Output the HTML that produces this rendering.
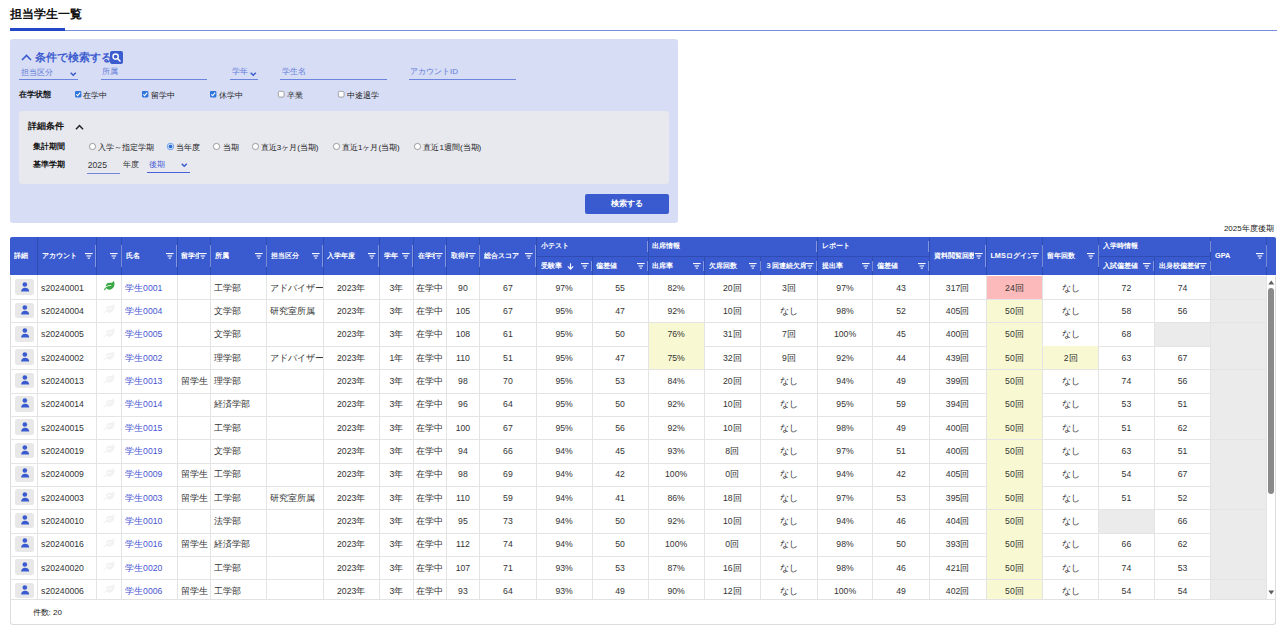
<!DOCTYPE html><html><head><meta charset="utf-8"><style>
html,body{margin:0;padding:0}
body{width:1280px;height:633px;overflow:hidden;background:#fff;position:relative;font-family:"Liberation Sans",sans-serif}
.a{position:absolute;line-height:1;white-space:nowrap}
.c{position:absolute;display:flex;align-items:center;overflow:hidden;white-space:nowrap;box-sizing:border-box}
svg{position:absolute;overflow:visible}
</style></head><body>
<div class="a" style="left:10px;top:8.37px;font-size:12.2px;color:#111;font-weight:bold;">担当学生一覧</div>
<div class="a" style="left:10px;top:30px;width:1266.70px;height:1.00px;background:#7b90dd"></div>
<div class="a" style="left:10px;top:27.9px;width:55.20px;height:2.80px;background:#2447c8"></div>
<div class="a" style="left:10px;top:39.4px;width:668.00px;height:183.60px;background:#d6ddf5;border-radius:3px"></div>
<svg style="left:21px;top:54px" width="11" height="7" viewBox="0 0 11 7"><polyline points="1,6 5.5,1.5 10,6" fill="none" stroke="#3b5bcf" stroke-width="1.6"/></svg>
<div class="a" style="left:34.8px;top:51.91px;font-size:10.5px;color:#3b5bcf;font-weight:bold;">条件で検索する</div>
<div class="a" style="left:110px;top:51px;width:12.80px;height:12.80px;background:#3b5bcf;border-radius:2px"></div>
<svg style="left:110px;top:51px" width="13" height="13" viewBox="0 0 13 13"><circle cx="5.6" cy="5.6" r="2.6" fill="none" stroke="#fff" stroke-width="1.4"/><line x1="7.5" y1="7.5" x2="10" y2="10" stroke="#fff" stroke-width="1.6" stroke-linecap="round"/></svg>
<div class="a" style="left:20.5px;top:68.73px;font-size:8px;color:#627ad8;font-weight:normal;">担当区分</div>
<svg style="left:70px;top:71.5px" width="6.5" height="4" viewBox="0 0 6.5 4"><polyline points="0.7,0.7 3.25,3.3 5.8,0.7" fill="none" stroke="#3b5bcf" stroke-width="1.5"/></svg>
<div class="a" style="left:18.8px;top:78.8px;width:59.70px;height:1.20px;background:#6b84e0"></div>
<div class="a" style="left:101.8px;top:68.23px;font-size:8px;color:#627ad8;font-weight:normal;">所属</div>
<div class="a" style="left:100.9px;top:78.8px;width:106.10px;height:1.20px;background:#6b84e0"></div>
<div class="a" style="left:231.9px;top:68.23px;font-size:8px;color:#627ad8;font-weight:normal;">学年</div>
<svg style="left:249.8px;top:71.5px" width="6.5" height="4" viewBox="0 0 6.5 4"><polyline points="0.7,0.7 3.25,3.3 5.8,0.7" fill="none" stroke="#3b5bcf" stroke-width="1.5"/></svg>
<div class="a" style="left:229.8px;top:78.8px;width:28.20px;height:1.20px;background:#6b84e0"></div>
<div class="a" style="left:281.5px;top:68.23px;font-size:8px;color:#627ad8;font-weight:normal;">学生名</div>
<div class="a" style="left:280px;top:78.8px;width:107.00px;height:1.20px;background:#6b84e0"></div>
<div class="a" style="left:410px;top:68.23px;font-size:8px;color:#627ad8;font-weight:normal;">アカウントID</div>
<div class="a" style="left:409px;top:78.8px;width:106.60px;height:1.20px;background:#6b84e0"></div>
<div class="a" style="left:18.8px;top:90.53px;font-size:8px;color:#111;font-weight:bold;">在学状態</div>
<svg style="left:74.7px;top:91px" width="6.4" height="6.4" viewBox="0 0 7 7"><rect x="0" y="0" width="7" height="7" rx="1.2" fill="#2f74db"/><polyline points="1.4,3.6 2.9,5.1 5.7,1.8" fill="none" stroke="#fff" stroke-width="1.1"/></svg>
<div class="a" style="left:83.3px;top:91.83px;font-size:8px;color:#222;font-weight:normal;">在学中</div>
<svg style="left:142px;top:91px" width="6.4" height="6.4" viewBox="0 0 7 7"><rect x="0" y="0" width="7" height="7" rx="1.2" fill="#2f74db"/><polyline points="1.4,3.6 2.9,5.1 5.7,1.8" fill="none" stroke="#fff" stroke-width="1.1"/></svg>
<div class="a" style="left:150.6px;top:91.83px;font-size:8px;color:#222;font-weight:normal;">留学中</div>
<svg style="left:210px;top:91px" width="6.4" height="6.4" viewBox="0 0 7 7"><rect x="0" y="0" width="7" height="7" rx="1.2" fill="#2f74db"/><polyline points="1.4,3.6 2.9,5.1 5.7,1.8" fill="none" stroke="#fff" stroke-width="1.1"/></svg>
<div class="a" style="left:218.6px;top:91.83px;font-size:8px;color:#222;font-weight:normal;">休学中</div>
<svg style="left:278.3px;top:91px" width="6.4" height="6.4" viewBox="0 0 7 7"><rect x="0.4" y="0.4" width="6.2" height="6.2" rx="1.2" fill="#fff" stroke="#777" stroke-width="0.7"/></svg>
<div class="a" style="left:286.90000000000003px;top:91.83px;font-size:8px;color:#222;font-weight:normal;">卒業</div>
<svg style="left:338.4px;top:91px" width="6.4" height="6.4" viewBox="0 0 7 7"><rect x="0.4" y="0.4" width="6.2" height="6.2" rx="1.2" fill="#fff" stroke="#777" stroke-width="0.7"/></svg>
<div class="a" style="left:347.0px;top:91.83px;font-size:8px;color:#222;font-weight:normal;">中途退学</div>
<div class="a" style="left:19px;top:111px;width:649.75px;height:73.40px;background:#e8e9ef;border-radius:3px"></div>
<div class="a" style="left:27.8px;top:121.70px;font-size:9.33px;color:#111;font-weight:bold;">詳細条件</div>
<svg style="left:74.5px;top:124px" width="9" height="6" viewBox="0 0 9 6"><polyline points="1,5.3 4.5,1.5 8,5.3" fill="none" stroke="#222" stroke-width="1.5"/></svg>
<div class="a" style="left:33px;top:142.73px;font-size:8px;color:#111;font-weight:bold;">集計期間</div>
<svg style="left:89px;top:143px" width="7" height="7" viewBox="0 0 7 7"><circle cx="3.5" cy="3.5" r="3.1" fill="#fff" stroke="#777" stroke-width="0.7"/></svg>
<div class="a" style="left:98.2px;top:143.73px;font-size:8px;color:#222;font-weight:normal;">入学～指定学期</div>
<svg style="left:167px;top:143px" width="7" height="7" viewBox="0 0 7 7"><circle cx="3.5" cy="3.5" r="3.2" fill="#fff" stroke="#2a6fd6" stroke-width="0.7"/><circle cx="3.5" cy="3.5" r="2" fill="#2a6fd6"/></svg>
<div class="a" style="left:176.2px;top:143.73px;font-size:8px;color:#222;font-weight:normal;">当年度</div>
<svg style="left:213.4px;top:143px" width="7" height="7" viewBox="0 0 7 7"><circle cx="3.5" cy="3.5" r="3.1" fill="#fff" stroke="#777" stroke-width="0.7"/></svg>
<div class="a" style="left:222.6px;top:143.73px;font-size:8px;color:#222;font-weight:normal;">当期</div>
<svg style="left:251.5px;top:143px" width="7" height="7" viewBox="0 0 7 7"><circle cx="3.5" cy="3.5" r="3.1" fill="#fff" stroke="#777" stroke-width="0.7"/></svg>
<div class="a" style="left:260.7px;top:143.73px;font-size:8px;color:#222;font-weight:normal;">直近3ヶ月(当期)</div>
<svg style="left:332.8px;top:143px" width="7" height="7" viewBox="0 0 7 7"><circle cx="3.5" cy="3.5" r="3.1" fill="#fff" stroke="#777" stroke-width="0.7"/></svg>
<div class="a" style="left:342.0px;top:143.73px;font-size:8px;color:#222;font-weight:normal;">直近1ヶ月(当期)</div>
<svg style="left:414.25px;top:143px" width="7" height="7" viewBox="0 0 7 7"><circle cx="3.5" cy="3.5" r="3.1" fill="#fff" stroke="#777" stroke-width="0.7"/></svg>
<div class="a" style="left:423.45px;top:143.73px;font-size:8px;color:#222;font-weight:normal;">直近1週間(当期)</div>
<div class="a" style="left:33px;top:161.03px;font-size:8px;color:#111;font-weight:bold;">基準学期</div>
<div class="a" style="left:87.7px;top:160.86px;font-size:8.67px;color:#333;font-weight:normal;">2025</div>
<div class="a" style="left:86.6px;top:173px;width:33.10px;height:1.10px;background:#7088da"></div>
<div class="a" style="left:122.8px;top:161.33px;font-size:8px;color:#333;font-weight:normal;">年度</div>
<div class="a" style="left:148.5px;top:161.33px;font-size:8px;color:#4a62d6;font-weight:normal;">後期</div>
<svg style="left:181px;top:163.4px" width="6.5" height="4" viewBox="0 0 6.5 4"><polyline points="0.7,0.7 3.25,3.3 5.8,0.7" fill="none" stroke="#3b5bcf" stroke-width="1.5"/></svg>
<div class="a" style="left:146.9px;top:171.5px;width:42.80px;height:1.10px;background:#4a62d6"></div>
<div class="a" style="left:585px;top:193.75px;width:83.75px;height:20.00px;background:#3a5bcf;border-radius:2px"></div>
<div class="c" style="left:585px;top:193.75px;width:83.75px;height:20px;justify-content:center;font-size:8px;color:#fff;font-weight:bold">検索する</div>
<div class="a" style="left:1223.9px;top:225.23px;font-size:8px;color:#222;font-weight:normal;">2025年度後期</div>
<div class="a" style="left:10px;top:275.5px;width:1265.70px;height:349.50px;border:1px solid #dcdcdc;border-top:none;box-sizing:border-box;border-radius:0 0 3px 3px;background:#fff"></div>
<div class="a" style="left:10px;top:236.6px;width:1265.70px;height:38.90px;background:#3a5bcf;border-radius:2px 2px 0 0"></div>
<div class="a" style="left:37.0px;top:236.6px;width:1.00px;height:38.90px;background:#2f4cb5"></div>
<div class="a" style="left:95.5px;top:236.6px;width:1.00px;height:38.90px;background:#2f4cb5"></div>
<div class="a" style="left:121.0px;top:236.6px;width:1.00px;height:38.90px;background:#2f4cb5"></div>
<div class="a" style="left:176.5px;top:236.6px;width:1.00px;height:38.90px;background:#2f4cb5"></div>
<div class="a" style="left:210.0px;top:236.6px;width:1.00px;height:38.90px;background:#2f4cb5"></div>
<div class="a" style="left:265.9px;top:236.6px;width:1.00px;height:38.90px;background:#2f4cb5"></div>
<div class="a" style="left:322.5px;top:236.6px;width:1.00px;height:38.90px;background:#2f4cb5"></div>
<div class="a" style="left:378.8px;top:236.6px;width:1.00px;height:38.90px;background:#2f4cb5"></div>
<div class="a" style="left:412.8px;top:236.6px;width:1.00px;height:38.90px;background:#2f4cb5"></div>
<div class="a" style="left:445.8px;top:236.6px;width:1.00px;height:38.90px;background:#2f4cb5"></div>
<div class="a" style="left:479.0px;top:236.6px;width:1.00px;height:38.90px;background:#2f4cb5"></div>
<div class="a" style="left:535.8px;top:236.6px;width:1.00px;height:38.90px;background:#2f4cb5"></div>
<div class="a" style="left:591.5px;top:236.6px;width:1.00px;height:38.90px;background:#2f4cb5"></div>
<div class="a" style="left:647.5px;top:236.6px;width:1.00px;height:38.90px;background:#2f4cb5"></div>
<div class="a" style="left:703.7px;top:236.6px;width:1.00px;height:38.90px;background:#2f4cb5"></div>
<div class="a" style="left:759.9px;top:236.6px;width:1.00px;height:38.90px;background:#2f4cb5"></div>
<div class="a" style="left:816.7px;top:236.6px;width:1.00px;height:38.90px;background:#2f4cb5"></div>
<div class="a" style="left:872.4px;top:236.6px;width:1.00px;height:38.90px;background:#2f4cb5"></div>
<div class="a" style="left:928.7px;top:236.6px;width:1.00px;height:38.90px;background:#2f4cb5"></div>
<div class="a" style="left:985.5px;top:236.6px;width:1.00px;height:38.90px;background:#2f4cb5"></div>
<div class="a" style="left:1042.3px;top:236.6px;width:1.00px;height:38.90px;background:#2f4cb5"></div>
<div class="a" style="left:1098.0px;top:236.6px;width:1.00px;height:38.90px;background:#2f4cb5"></div>
<div class="a" style="left:1153.8px;top:236.6px;width:1.00px;height:38.90px;background:#2f4cb5"></div>
<div class="a" style="left:1210.1px;top:236.6px;width:1.00px;height:38.90px;background:#2f4cb5"></div>
<div class="a" style="left:1266.4px;top:236.6px;width:1.00px;height:38.90px;background:#2f4cb5"></div>
<div class="a" style="left:536.8px;top:236.6px;width:110.70px;height:19.80px;background:#3a5bcf"></div>
<div class="a" style="left:536.8px;top:255.89999999999998px;width:110.70px;height:1.00px;background:#2f4cb5"></div>
<div class="a" style="left:648.5px;top:236.6px;width:168.20px;height:19.80px;background:#3a5bcf"></div>
<div class="a" style="left:648.5px;top:255.89999999999998px;width:168.20px;height:1.00px;background:#2f4cb5"></div>
<div class="a" style="left:817.7px;top:236.6px;width:111.00px;height:19.80px;background:#3a5bcf"></div>
<div class="a" style="left:817.7px;top:255.89999999999998px;width:111.00px;height:1.00px;background:#2f4cb5"></div>
<div class="a" style="left:1099.0px;top:236.6px;width:111.10px;height:19.80px;background:#3a5bcf"></div>
<div class="a" style="left:1099.0px;top:255.89999999999998px;width:111.10px;height:1.00px;background:#2f4cb5"></div>
<div class="c" style="left:14.40px;top:236.60px;width:21.10px;height:38.90px;font-size:7.33px;color:#fff;font-weight:bold;line-height:1;padding-bottom:0.6px">詳細</div>
<div class="c" style="left:41.90px;top:236.60px;width:42.60px;height:38.90px;font-size:7.33px;color:#fff;font-weight:bold;line-height:1;padding-bottom:0.6px">アカウント</div>
<svg style="left:84.60px;top:252.95px" width="8" height="6" viewBox="0 0 8 6"><rect x="0" y="0" width="7.6" height="1.1" fill="#fff"/><rect x="1.5" y="2.4" width="4.6" height="1.1" fill="#fff"/><rect x="2.7" y="4.6" width="2.2" height="1.1" fill="#fff"/></svg>
<div class="a" style="left:95.1px;top:245.15800000000002px;width:1.00px;height:21.78px;background:rgba(255,255,255,0.36)"></div>
<div class="c" style="left:100.40px;top:236.60px;width:9.60px;height:38.90px;font-size:7.33px;color:#fff;font-weight:bold;line-height:1;padding-bottom:0.6px"></div>
<svg style="left:110.10px;top:252.95px" width="8" height="6" viewBox="0 0 8 6"><rect x="0" y="0" width="7.6" height="1.1" fill="#fff"/><rect x="1.5" y="2.4" width="4.6" height="1.1" fill="#fff"/><rect x="2.7" y="4.6" width="2.2" height="1.1" fill="#fff"/></svg>
<div class="a" style="left:120.6px;top:245.15800000000002px;width:1.00px;height:21.78px;background:rgba(255,255,255,0.36)"></div>
<div class="c" style="left:125.90px;top:236.60px;width:39.60px;height:38.90px;font-size:7.33px;color:#fff;font-weight:bold;line-height:1;padding-bottom:0.6px">氏名</div>
<svg style="left:165.60px;top:252.95px" width="8" height="6" viewBox="0 0 8 6"><rect x="0" y="0" width="7.6" height="1.1" fill="#fff"/><rect x="1.5" y="2.4" width="4.6" height="1.1" fill="#fff"/><rect x="2.7" y="4.6" width="2.2" height="1.1" fill="#fff"/></svg>
<div class="a" style="left:176.1px;top:245.15800000000002px;width:1.00px;height:21.78px;background:rgba(255,255,255,0.36)"></div>
<div class="c" style="left:181.40px;top:236.60px;width:17.60px;height:38.90px;font-size:7.33px;color:#fff;font-weight:bold;line-height:1;padding-bottom:0.6px">留学生区分</div>
<svg style="left:199.10px;top:252.95px" width="8" height="6" viewBox="0 0 8 6"><rect x="0" y="0" width="7.6" height="1.1" fill="#fff"/><rect x="1.5" y="2.4" width="4.6" height="1.1" fill="#fff"/><rect x="2.7" y="4.6" width="2.2" height="1.1" fill="#fff"/></svg>
<div class="a" style="left:209.6px;top:245.15800000000002px;width:1.00px;height:21.78px;background:rgba(255,255,255,0.36)"></div>
<div class="c" style="left:214.90px;top:236.60px;width:40.00px;height:38.90px;font-size:7.33px;color:#fff;font-weight:bold;line-height:1;padding-bottom:0.6px">所属</div>
<svg style="left:255.00px;top:252.95px" width="8" height="6" viewBox="0 0 8 6"><rect x="0" y="0" width="7.6" height="1.1" fill="#fff"/><rect x="1.5" y="2.4" width="4.6" height="1.1" fill="#fff"/><rect x="2.7" y="4.6" width="2.2" height="1.1" fill="#fff"/></svg>
<div class="a" style="left:265.5px;top:245.15800000000002px;width:1.00px;height:21.78px;background:rgba(255,255,255,0.36)"></div>
<div class="c" style="left:270.80px;top:236.60px;width:40.70px;height:38.90px;font-size:7.33px;color:#fff;font-weight:bold;line-height:1;padding-bottom:0.6px">担当区分</div>
<svg style="left:311.60px;top:252.95px" width="8" height="6" viewBox="0 0 8 6"><rect x="0" y="0" width="7.6" height="1.1" fill="#fff"/><rect x="1.5" y="2.4" width="4.6" height="1.1" fill="#fff"/><rect x="2.7" y="4.6" width="2.2" height="1.1" fill="#fff"/></svg>
<div class="a" style="left:322.1px;top:245.15800000000002px;width:1.00px;height:21.78px;background:rgba(255,255,255,0.36)"></div>
<div class="c" style="left:327.40px;top:236.60px;width:40.40px;height:38.90px;font-size:7.33px;color:#fff;font-weight:bold;line-height:1;padding-bottom:0.6px">入学年度</div>
<svg style="left:367.90px;top:252.95px" width="8" height="6" viewBox="0 0 8 6"><rect x="0" y="0" width="7.6" height="1.1" fill="#fff"/><rect x="1.5" y="2.4" width="4.6" height="1.1" fill="#fff"/><rect x="2.7" y="4.6" width="2.2" height="1.1" fill="#fff"/></svg>
<div class="a" style="left:378.40000000000003px;top:245.15800000000002px;width:1.00px;height:21.78px;background:rgba(255,255,255,0.36)"></div>
<div class="c" style="left:383.70px;top:236.60px;width:18.10px;height:38.90px;font-size:7.33px;color:#fff;font-weight:bold;line-height:1;padding-bottom:0.6px">学年</div>
<svg style="left:401.90px;top:252.95px" width="8" height="6" viewBox="0 0 8 6"><rect x="0" y="0" width="7.6" height="1.1" fill="#fff"/><rect x="1.5" y="2.4" width="4.6" height="1.1" fill="#fff"/><rect x="2.7" y="4.6" width="2.2" height="1.1" fill="#fff"/></svg>
<div class="a" style="left:412.40000000000003px;top:245.15800000000002px;width:1.00px;height:21.78px;background:rgba(255,255,255,0.36)"></div>
<div class="c" style="left:417.70px;top:236.60px;width:17.10px;height:38.90px;font-size:7.33px;color:#fff;font-weight:bold;line-height:1;padding-bottom:0.6px">在学状態</div>
<svg style="left:434.90px;top:252.95px" width="8" height="6" viewBox="0 0 8 6"><rect x="0" y="0" width="7.6" height="1.1" fill="#fff"/><rect x="1.5" y="2.4" width="4.6" height="1.1" fill="#fff"/><rect x="2.7" y="4.6" width="2.2" height="1.1" fill="#fff"/></svg>
<div class="a" style="left:445.40000000000003px;top:245.15800000000002px;width:1.00px;height:21.78px;background:rgba(255,255,255,0.36)"></div>
<div class="c" style="left:450.70px;top:236.60px;width:17.30px;height:38.90px;font-size:7.33px;color:#fff;font-weight:bold;line-height:1;padding-bottom:0.6px">取得単位数</div>
<svg style="left:468.10px;top:252.95px" width="8" height="6" viewBox="0 0 8 6"><rect x="0" y="0" width="7.6" height="1.1" fill="#fff"/><rect x="1.5" y="2.4" width="4.6" height="1.1" fill="#fff"/><rect x="2.7" y="4.6" width="2.2" height="1.1" fill="#fff"/></svg>
<div class="a" style="left:478.6px;top:245.15800000000002px;width:1.00px;height:21.78px;background:rgba(255,255,255,0.36)"></div>
<div class="c" style="left:483.90px;top:236.60px;width:40.90px;height:38.90px;font-size:7.33px;color:#fff;font-weight:bold;line-height:1;padding-bottom:0.6px">総合スコア</div>
<svg style="left:524.90px;top:252.95px" width="8" height="6" viewBox="0 0 8 6"><rect x="0" y="0" width="7.6" height="1.1" fill="#fff"/><rect x="1.5" y="2.4" width="4.6" height="1.1" fill="#fff"/><rect x="2.7" y="4.6" width="2.2" height="1.1" fill="#fff"/></svg>
<div class="a" style="left:535.4px;top:245.15800000000002px;width:1.00px;height:21.78px;background:rgba(255,255,255,0.36)"></div>
<div class="c" style="left:933.60px;top:236.60px;width:40.90px;height:38.90px;font-size:7.33px;color:#fff;font-weight:bold;line-height:1;padding-bottom:0.6px">資料閲覧回数</div>
<svg style="left:974.60px;top:252.95px" width="8" height="6" viewBox="0 0 8 6"><rect x="0" y="0" width="7.6" height="1.1" fill="#fff"/><rect x="1.5" y="2.4" width="4.6" height="1.1" fill="#fff"/><rect x="2.7" y="4.6" width="2.2" height="1.1" fill="#fff"/></svg>
<div class="a" style="left:985.1px;top:245.15800000000002px;width:1.00px;height:21.78px;background:rgba(255,255,255,0.36)"></div>
<div class="c" style="left:990.40px;top:236.60px;width:40.90px;height:38.90px;font-size:7.33px;color:#fff;font-weight:bold;line-height:1;padding-bottom:0.6px">LMSログイン回数</div>
<svg style="left:1031.40px;top:252.95px" width="8" height="6" viewBox="0 0 8 6"><rect x="0" y="0" width="7.6" height="1.1" fill="#fff"/><rect x="1.5" y="2.4" width="4.6" height="1.1" fill="#fff"/><rect x="2.7" y="4.6" width="2.2" height="1.1" fill="#fff"/></svg>
<div class="a" style="left:1041.8999999999999px;top:245.15800000000002px;width:1.00px;height:21.78px;background:rgba(255,255,255,0.36)"></div>
<div class="c" style="left:1047.20px;top:236.60px;width:39.80px;height:38.90px;font-size:7.33px;color:#fff;font-weight:bold;line-height:1;padding-bottom:0.6px">留年回数</div>
<svg style="left:1087.10px;top:252.95px" width="8" height="6" viewBox="0 0 8 6"><rect x="0" y="0" width="7.6" height="1.1" fill="#fff"/><rect x="1.5" y="2.4" width="4.6" height="1.1" fill="#fff"/><rect x="2.7" y="4.6" width="2.2" height="1.1" fill="#fff"/></svg>
<div class="a" style="left:1097.6px;top:245.15800000000002px;width:1.00px;height:21.78px;background:rgba(255,255,255,0.36)"></div>
<div class="c" style="left:1215.00px;top:236.60px;width:40.40px;height:38.90px;font-size:7.33px;color:#fff;font-weight:bold;line-height:1;padding-bottom:0.6px">GPA</div>
<svg style="left:1255.50px;top:252.95px" width="8" height="6" viewBox="0 0 8 6"><rect x="0" y="0" width="7.6" height="1.1" fill="#fff"/><rect x="1.5" y="2.4" width="4.6" height="1.1" fill="#fff"/><rect x="2.7" y="4.6" width="2.2" height="1.1" fill="#fff"/></svg>
<div class="a" style="left:1266.0px;top:245.15800000000002px;width:1.00px;height:21.78px;background:rgba(255,255,255,0.36)"></div>
<div class="c" style="left:540.70px;top:236.60px;width:105.30px;height:19.80px;font-size:7.33px;color:#fff;font-weight:bold;line-height:1;padding-bottom:1.5px">小テスト</div>
<div class="a" style="left:647.1px;top:240.95600000000002px;width:1.00px;height:11.09px;background:rgba(255,255,255,0.36)"></div>
<div class="c" style="left:540.70px;top:256.40px;width:39.80px;height:19.10px;font-size:7.33px;color:#fff;font-weight:bold;line-height:1;padding-bottom:1.5px">受験率</div>
<svg style="left:580.60px;top:262.85px" width="8" height="6" viewBox="0 0 8 6"><rect x="0" y="0" width="7.6" height="1.1" fill="#fff"/><rect x="1.5" y="2.4" width="4.6" height="1.1" fill="#fff"/><rect x="2.7" y="4.6" width="2.2" height="1.1" fill="#fff"/></svg>
<svg style="left:567.10px;top:262.65px" width="7" height="7" viewBox="0 0 7 7"><line x1="3.5" y1="0.4" x2="3.5" y2="6" stroke="#fff" stroke-width="1.2"/><polyline points="0.8,3.4 3.5,6.1 6.2,3.4" fill="none" stroke="#fff" stroke-width="1.2"/></svg>
<div class="a" style="left:591.1px;top:260.602px;width:1.00px;height:10.70px;background:rgba(255,255,255,0.36)"></div>
<div class="c" style="left:596.40px;top:256.40px;width:40.10px;height:19.10px;font-size:7.33px;color:#fff;font-weight:bold;line-height:1;padding-bottom:1.5px">偏差値</div>
<svg style="left:636.60px;top:262.85px" width="8" height="6" viewBox="0 0 8 6"><rect x="0" y="0" width="7.6" height="1.1" fill="#fff"/><rect x="1.5" y="2.4" width="4.6" height="1.1" fill="#fff"/><rect x="2.7" y="4.6" width="2.2" height="1.1" fill="#fff"/></svg>
<div class="a" style="left:647.1px;top:260.602px;width:1.00px;height:10.70px;background:rgba(255,255,255,0.36)"></div>
<div class="c" style="left:652.40px;top:236.60px;width:162.80px;height:19.80px;font-size:7.33px;color:#fff;font-weight:bold;line-height:1;padding-bottom:1.5px">出席情報</div>
<div class="a" style="left:816.3000000000001px;top:240.95600000000002px;width:1.00px;height:11.09px;background:rgba(255,255,255,0.36)"></div>
<div class="c" style="left:652.40px;top:256.40px;width:40.30px;height:19.10px;font-size:7.33px;color:#fff;font-weight:bold;line-height:1;padding-bottom:1.5px">出席率</div>
<svg style="left:692.80px;top:262.85px" width="8" height="6" viewBox="0 0 8 6"><rect x="0" y="0" width="7.6" height="1.1" fill="#fff"/><rect x="1.5" y="2.4" width="4.6" height="1.1" fill="#fff"/><rect x="2.7" y="4.6" width="2.2" height="1.1" fill="#fff"/></svg>
<div class="a" style="left:703.3000000000001px;top:260.602px;width:1.00px;height:10.70px;background:rgba(255,255,255,0.36)"></div>
<div class="c" style="left:708.60px;top:256.40px;width:40.30px;height:19.10px;font-size:7.33px;color:#fff;font-weight:bold;line-height:1;padding-bottom:1.5px">欠席回数</div>
<svg style="left:749.00px;top:262.85px" width="8" height="6" viewBox="0 0 8 6"><rect x="0" y="0" width="7.6" height="1.1" fill="#fff"/><rect x="1.5" y="2.4" width="4.6" height="1.1" fill="#fff"/><rect x="2.7" y="4.6" width="2.2" height="1.1" fill="#fff"/></svg>
<div class="a" style="left:759.5px;top:260.602px;width:1.00px;height:10.70px;background:rgba(255,255,255,0.36)"></div>
<div class="c" style="left:764.80px;top:256.40px;width:40.90px;height:19.10px;font-size:7.33px;color:#fff;font-weight:bold;line-height:1;padding-bottom:1.5px">３回連続欠席</div>
<svg style="left:805.80px;top:262.85px" width="8" height="6" viewBox="0 0 8 6"><rect x="0" y="0" width="7.6" height="1.1" fill="#fff"/><rect x="1.5" y="2.4" width="4.6" height="1.1" fill="#fff"/><rect x="2.7" y="4.6" width="2.2" height="1.1" fill="#fff"/></svg>
<div class="a" style="left:816.3000000000001px;top:260.602px;width:1.00px;height:10.70px;background:rgba(255,255,255,0.36)"></div>
<div class="c" style="left:821.60px;top:236.60px;width:105.60px;height:19.80px;font-size:7.33px;color:#fff;font-weight:bold;line-height:1;padding-bottom:1.5px">レポート</div>
<div class="a" style="left:928.3000000000001px;top:240.95600000000002px;width:1.00px;height:11.09px;background:rgba(255,255,255,0.36)"></div>
<div class="c" style="left:821.60px;top:256.40px;width:39.80px;height:19.10px;font-size:7.33px;color:#fff;font-weight:bold;line-height:1;padding-bottom:1.5px">提出率</div>
<svg style="left:861.50px;top:262.85px" width="8" height="6" viewBox="0 0 8 6"><rect x="0" y="0" width="7.6" height="1.1" fill="#fff"/><rect x="1.5" y="2.4" width="4.6" height="1.1" fill="#fff"/><rect x="2.7" y="4.6" width="2.2" height="1.1" fill="#fff"/></svg>
<div class="a" style="left:872.0px;top:260.602px;width:1.00px;height:10.70px;background:rgba(255,255,255,0.36)"></div>
<div class="c" style="left:877.30px;top:256.40px;width:40.40px;height:19.10px;font-size:7.33px;color:#fff;font-weight:bold;line-height:1;padding-bottom:1.5px">偏差値</div>
<svg style="left:917.80px;top:262.85px" width="8" height="6" viewBox="0 0 8 6"><rect x="0" y="0" width="7.6" height="1.1" fill="#fff"/><rect x="1.5" y="2.4" width="4.6" height="1.1" fill="#fff"/><rect x="2.7" y="4.6" width="2.2" height="1.1" fill="#fff"/></svg>
<div class="a" style="left:928.3000000000001px;top:260.602px;width:1.00px;height:10.70px;background:rgba(255,255,255,0.36)"></div>
<div class="c" style="left:1102.90px;top:236.60px;width:105.70px;height:19.80px;font-size:7.33px;color:#fff;font-weight:bold;line-height:1;padding-bottom:1.5px">入学時情報</div>
<div class="a" style="left:1209.6999999999998px;top:240.95600000000002px;width:1.00px;height:11.09px;background:rgba(255,255,255,0.36)"></div>
<div class="c" style="left:1102.90px;top:256.40px;width:39.90px;height:19.10px;font-size:7.33px;color:#fff;font-weight:bold;line-height:1;padding-bottom:1.5px">入試偏差値</div>
<svg style="left:1142.90px;top:262.85px" width="8" height="6" viewBox="0 0 8 6"><rect x="0" y="0" width="7.6" height="1.1" fill="#fff"/><rect x="1.5" y="2.4" width="4.6" height="1.1" fill="#fff"/><rect x="2.7" y="4.6" width="2.2" height="1.1" fill="#fff"/></svg>
<div class="a" style="left:1153.3999999999999px;top:260.602px;width:1.00px;height:10.70px;background:rgba(255,255,255,0.36)"></div>
<div class="c" style="left:1158.70px;top:256.40px;width:40.40px;height:19.10px;font-size:7.33px;color:#fff;font-weight:bold;line-height:1;padding-bottom:1.5px">出身校偏差値</div>
<svg style="left:1199.20px;top:262.85px" width="8" height="6" viewBox="0 0 8 6"><rect x="0" y="0" width="7.6" height="1.1" fill="#fff"/><rect x="1.5" y="2.4" width="4.6" height="1.1" fill="#fff"/><rect x="2.7" y="4.6" width="2.2" height="1.1" fill="#fff"/></svg>
<div class="a" style="left:1209.6999999999998px;top:260.602px;width:1.00px;height:10.70px;background:rgba(255,255,255,0.36)"></div>
<div class="a" style="left:0;top:0;width:1280px;height:599.20px;overflow:hidden">
<div class="a" style="left:986px;top:276.3px;width:56.80px;height:23.34px;background:#fdbaba"></div>
<div class="a" style="left:1210.6px;top:276.3px;width:56.30px;height:23.34px;background:#ebebeb"></div>
<div class="a" style="left:10px;top:299.14px;width:1256.90px;height:1.00px;background:#e4e4e4"></div>
<div class="a" style="left:14.8px;top:279.2px;width:19.30px;height:15.80px;background:#e8e8e8;border-radius:2.5px"></div>
<svg style="left:20.8px;top:281.60px" width="9" height="10" viewBox="0 0 9 10"><circle cx="3.85" cy="2.55" r="2.3" fill="#3a5bcf"/><path d="M0.1,9.6 C0.1,7.1 1.8,5.8 4.15,5.8 C6.5,5.8 8.2,7.1 8.2,9.6 Z" fill="#3a5bcf"/></svg>
<svg style="left:103.7px;top:281.00px" width="11" height="10" viewBox="0 0 11 10"><path transform="scale(0.01823)" d="M546.2 9.7c-5.6-12.5-21.6-13-28.3-1.2C486.9 62.4 431.4 96 368 96h-80C182 96 96 182 96 288c0 7 .8 13.7 1.5 20.5C161.3 262.8 253.4 224 384 224c8.8 0 16 7.2 16 16s-7.2 16-16 16C132.6 256 26 410.1 2.4 468c-6.6 16.3 1.2 34.9 17.5 41.6 16.4 6.8 35-1.1 41.8-17.3 1.5-3.6 20.9-47.9 71.9-90.6 32.4 43.9 94 85.8 174.9 77.2C465.5 467.5 576 326.7 576 154.3c0-50.2-10.8-102.2-29.8-144.6z" fill="#3aa845"/></svg>
<div class="c" style="left:37.50px;top:276.30px;width:58.50px;height:23.34px;justify-content:flex-start;padding-left:3.6px;font-size:8.67px;color:#333;line-height:1;padding-bottom:0.2px">s20240001</div>
<div class="c" style="left:121.50px;top:276.30px;width:55.50px;height:23.34px;justify-content:flex-start;padding-left:3.6px;font-size:8.67px;color:#4756d2;line-height:1;padding-bottom:0.2px">学生0001</div>
<div class="c" style="left:210.50px;top:276.30px;width:55.90px;height:23.34px;justify-content:flex-start;padding-left:3.6px;font-size:8.67px;color:#333;line-height:1;padding-bottom:0.2px">工学部</div>
<div class="c" style="left:266.40px;top:276.30px;width:56.60px;height:23.34px;justify-content:flex-start;padding-left:3.6px;font-size:8.67px;color:#333;line-height:1;padding-bottom:0.2px">アドバイザー</div>
<div class="c" style="left:323.00px;top:276.30px;width:56.30px;height:23.34px;justify-content:center;font-size:8.67px;color:#333;line-height:1;padding-bottom:0.2px">2023年</div>
<div class="c" style="left:379.30px;top:276.30px;width:34.00px;height:23.34px;justify-content:center;font-size:8.67px;color:#333;line-height:1;padding-bottom:0.2px">3年</div>
<div class="c" style="left:413.30px;top:276.30px;width:33.00px;height:23.34px;justify-content:center;font-size:8.67px;color:#333;line-height:1;padding-bottom:0.2px">在学中</div>
<div class="c" style="left:446.30px;top:276.30px;width:33.20px;height:23.34px;justify-content:center;font-size:8.67px;color:#333;line-height:1;padding-bottom:0.2px">90</div>
<div class="c" style="left:479.50px;top:276.30px;width:56.80px;height:23.34px;justify-content:center;font-size:8.67px;color:#333;line-height:1;padding-bottom:0.2px">67</div>
<div class="c" style="left:536.30px;top:276.30px;width:55.70px;height:23.34px;justify-content:center;font-size:8.67px;color:#333;line-height:1;padding-bottom:0.2px">97%</div>
<div class="c" style="left:592.00px;top:276.30px;width:56.00px;height:23.34px;justify-content:center;font-size:8.67px;color:#333;line-height:1;padding-bottom:0.2px">55</div>
<div class="c" style="left:648.00px;top:276.30px;width:56.20px;height:23.34px;justify-content:center;font-size:8.67px;color:#333;line-height:1;padding-bottom:0.2px">82%</div>
<div class="c" style="left:704.20px;top:276.30px;width:56.20px;height:23.34px;justify-content:center;font-size:8.67px;color:#333;line-height:1;padding-bottom:0.2px">20回</div>
<div class="c" style="left:760.40px;top:276.30px;width:56.80px;height:23.34px;justify-content:center;font-size:8.67px;color:#333;line-height:1;padding-bottom:0.2px">3回</div>
<div class="c" style="left:817.20px;top:276.30px;width:55.70px;height:23.34px;justify-content:center;font-size:8.67px;color:#333;line-height:1;padding-bottom:0.2px">97%</div>
<div class="c" style="left:872.90px;top:276.30px;width:56.30px;height:23.34px;justify-content:center;font-size:8.67px;color:#333;line-height:1;padding-bottom:0.2px">43</div>
<div class="c" style="left:929.20px;top:276.30px;width:56.80px;height:23.34px;justify-content:center;font-size:8.67px;color:#333;line-height:1;padding-bottom:0.2px">317回</div>
<div class="c" style="left:986.00px;top:276.30px;width:56.80px;height:23.34px;justify-content:center;font-size:8.67px;color:#333;line-height:1;padding-bottom:0.2px">24回</div>
<div class="c" style="left:1042.80px;top:276.30px;width:55.70px;height:23.34px;justify-content:center;font-size:8.67px;color:#333;line-height:1;padding-bottom:0.2px">なし</div>
<div class="c" style="left:1098.50px;top:276.30px;width:55.80px;height:23.34px;justify-content:center;font-size:8.67px;color:#333;line-height:1;padding-bottom:0.2px">72</div>
<div class="c" style="left:1154.30px;top:276.30px;width:56.30px;height:23.34px;justify-content:center;font-size:8.67px;color:#333;line-height:1;padding-bottom:0.2px">74</div>
<div class="a" style="left:986px;top:299.64px;width:56.80px;height:23.34px;background:#f8f8d2"></div>
<div class="a" style="left:1210.6px;top:299.64px;width:56.30px;height:23.34px;background:#ebebeb"></div>
<div class="a" style="left:10px;top:322.47999999999996px;width:1256.90px;height:1.00px;background:#e4e4e4"></div>
<div class="a" style="left:14.8px;top:302.53999999999996px;width:19.30px;height:15.80px;background:#e8e8e8;border-radius:2.5px"></div>
<svg style="left:20.8px;top:304.94px" width="9" height="10" viewBox="0 0 9 10"><circle cx="3.85" cy="2.55" r="2.3" fill="#3a5bcf"/><path d="M0.1,9.6 C0.1,7.1 1.8,5.8 4.15,5.8 C6.5,5.8 8.2,7.1 8.2,9.6 Z" fill="#3a5bcf"/></svg>
<svg style="left:103.7px;top:304.34px" width="11" height="10" viewBox="0 0 11 10"><path transform="scale(0.01823)" d="M546.2 9.7c-5.6-12.5-21.6-13-28.3-1.2C486.9 62.4 431.4 96 368 96h-80C182 96 96 182 96 288c0 7 .8 13.7 1.5 20.5C161.3 262.8 253.4 224 384 224c8.8 0 16 7.2 16 16s-7.2 16-16 16C132.6 256 26 410.1 2.4 468c-6.6 16.3 1.2 34.9 17.5 41.6 16.4 6.8 35-1.1 41.8-17.3 1.5-3.6 20.9-47.9 71.9-90.6 32.4 43.9 94 85.8 174.9 77.2C465.5 467.5 576 326.7 576 154.3c0-50.2-10.8-102.2-29.8-144.6z" fill="#f2f2f2"/></svg>
<div class="c" style="left:37.50px;top:299.64px;width:58.50px;height:23.34px;justify-content:flex-start;padding-left:3.6px;font-size:8.67px;color:#333;line-height:1;padding-bottom:0.2px">s20240004</div>
<div class="c" style="left:121.50px;top:299.64px;width:55.50px;height:23.34px;justify-content:flex-start;padding-left:3.6px;font-size:8.67px;color:#4756d2;line-height:1;padding-bottom:0.2px">学生0004</div>
<div class="c" style="left:210.50px;top:299.64px;width:55.90px;height:23.34px;justify-content:flex-start;padding-left:3.6px;font-size:8.67px;color:#333;line-height:1;padding-bottom:0.2px">文学部</div>
<div class="c" style="left:266.40px;top:299.64px;width:56.60px;height:23.34px;justify-content:flex-start;padding-left:3.6px;font-size:8.67px;color:#333;line-height:1;padding-bottom:0.2px">研究室所属</div>
<div class="c" style="left:323.00px;top:299.64px;width:56.30px;height:23.34px;justify-content:center;font-size:8.67px;color:#333;line-height:1;padding-bottom:0.2px">2023年</div>
<div class="c" style="left:379.30px;top:299.64px;width:34.00px;height:23.34px;justify-content:center;font-size:8.67px;color:#333;line-height:1;padding-bottom:0.2px">3年</div>
<div class="c" style="left:413.30px;top:299.64px;width:33.00px;height:23.34px;justify-content:center;font-size:8.67px;color:#333;line-height:1;padding-bottom:0.2px">在学中</div>
<div class="c" style="left:446.30px;top:299.64px;width:33.20px;height:23.34px;justify-content:center;font-size:8.67px;color:#333;line-height:1;padding-bottom:0.2px">105</div>
<div class="c" style="left:479.50px;top:299.64px;width:56.80px;height:23.34px;justify-content:center;font-size:8.67px;color:#333;line-height:1;padding-bottom:0.2px">67</div>
<div class="c" style="left:536.30px;top:299.64px;width:55.70px;height:23.34px;justify-content:center;font-size:8.67px;color:#333;line-height:1;padding-bottom:0.2px">95%</div>
<div class="c" style="left:592.00px;top:299.64px;width:56.00px;height:23.34px;justify-content:center;font-size:8.67px;color:#333;line-height:1;padding-bottom:0.2px">47</div>
<div class="c" style="left:648.00px;top:299.64px;width:56.20px;height:23.34px;justify-content:center;font-size:8.67px;color:#333;line-height:1;padding-bottom:0.2px">92%</div>
<div class="c" style="left:704.20px;top:299.64px;width:56.20px;height:23.34px;justify-content:center;font-size:8.67px;color:#333;line-height:1;padding-bottom:0.2px">10回</div>
<div class="c" style="left:760.40px;top:299.64px;width:56.80px;height:23.34px;justify-content:center;font-size:8.67px;color:#333;line-height:1;padding-bottom:0.2px">なし</div>
<div class="c" style="left:817.20px;top:299.64px;width:55.70px;height:23.34px;justify-content:center;font-size:8.67px;color:#333;line-height:1;padding-bottom:0.2px">98%</div>
<div class="c" style="left:872.90px;top:299.64px;width:56.30px;height:23.34px;justify-content:center;font-size:8.67px;color:#333;line-height:1;padding-bottom:0.2px">52</div>
<div class="c" style="left:929.20px;top:299.64px;width:56.80px;height:23.34px;justify-content:center;font-size:8.67px;color:#333;line-height:1;padding-bottom:0.2px">405回</div>
<div class="c" style="left:986.00px;top:299.64px;width:56.80px;height:23.34px;justify-content:center;font-size:8.67px;color:#333;line-height:1;padding-bottom:0.2px">50回</div>
<div class="c" style="left:1042.80px;top:299.64px;width:55.70px;height:23.34px;justify-content:center;font-size:8.67px;color:#333;line-height:1;padding-bottom:0.2px">なし</div>
<div class="c" style="left:1098.50px;top:299.64px;width:55.80px;height:23.34px;justify-content:center;font-size:8.67px;color:#333;line-height:1;padding-bottom:0.2px">58</div>
<div class="c" style="left:1154.30px;top:299.64px;width:56.30px;height:23.34px;justify-content:center;font-size:8.67px;color:#333;line-height:1;padding-bottom:0.2px">56</div>
<div class="a" style="left:648px;top:322.98px;width:56.20px;height:23.34px;background:#f8f8d2"></div>
<div class="a" style="left:986px;top:322.98px;width:56.80px;height:23.34px;background:#f8f8d2"></div>
<div class="a" style="left:1154.3px;top:322.98px;width:56.30px;height:23.34px;background:#ebebeb"></div>
<div class="a" style="left:1210.6px;top:322.98px;width:56.30px;height:23.34px;background:#ebebeb"></div>
<div class="a" style="left:10px;top:345.82px;width:1256.90px;height:1.00px;background:#e4e4e4"></div>
<div class="a" style="left:14.8px;top:325.88px;width:19.30px;height:15.80px;background:#e8e8e8;border-radius:2.5px"></div>
<svg style="left:20.8px;top:328.28px" width="9" height="10" viewBox="0 0 9 10"><circle cx="3.85" cy="2.55" r="2.3" fill="#3a5bcf"/><path d="M0.1,9.6 C0.1,7.1 1.8,5.8 4.15,5.8 C6.5,5.8 8.2,7.1 8.2,9.6 Z" fill="#3a5bcf"/></svg>
<svg style="left:103.7px;top:327.68px" width="11" height="10" viewBox="0 0 11 10"><path transform="scale(0.01823)" d="M546.2 9.7c-5.6-12.5-21.6-13-28.3-1.2C486.9 62.4 431.4 96 368 96h-80C182 96 96 182 96 288c0 7 .8 13.7 1.5 20.5C161.3 262.8 253.4 224 384 224c8.8 0 16 7.2 16 16s-7.2 16-16 16C132.6 256 26 410.1 2.4 468c-6.6 16.3 1.2 34.9 17.5 41.6 16.4 6.8 35-1.1 41.8-17.3 1.5-3.6 20.9-47.9 71.9-90.6 32.4 43.9 94 85.8 174.9 77.2C465.5 467.5 576 326.7 576 154.3c0-50.2-10.8-102.2-29.8-144.6z" fill="#f2f2f2"/></svg>
<div class="c" style="left:37.50px;top:322.98px;width:58.50px;height:23.34px;justify-content:flex-start;padding-left:3.6px;font-size:8.67px;color:#333;line-height:1;padding-bottom:0.2px">s20240005</div>
<div class="c" style="left:121.50px;top:322.98px;width:55.50px;height:23.34px;justify-content:flex-start;padding-left:3.6px;font-size:8.67px;color:#4756d2;line-height:1;padding-bottom:0.2px">学生0005</div>
<div class="c" style="left:210.50px;top:322.98px;width:55.90px;height:23.34px;justify-content:flex-start;padding-left:3.6px;font-size:8.67px;color:#333;line-height:1;padding-bottom:0.2px">文学部</div>
<div class="c" style="left:323.00px;top:322.98px;width:56.30px;height:23.34px;justify-content:center;font-size:8.67px;color:#333;line-height:1;padding-bottom:0.2px">2023年</div>
<div class="c" style="left:379.30px;top:322.98px;width:34.00px;height:23.34px;justify-content:center;font-size:8.67px;color:#333;line-height:1;padding-bottom:0.2px">3年</div>
<div class="c" style="left:413.30px;top:322.98px;width:33.00px;height:23.34px;justify-content:center;font-size:8.67px;color:#333;line-height:1;padding-bottom:0.2px">在学中</div>
<div class="c" style="left:446.30px;top:322.98px;width:33.20px;height:23.34px;justify-content:center;font-size:8.67px;color:#333;line-height:1;padding-bottom:0.2px">108</div>
<div class="c" style="left:479.50px;top:322.98px;width:56.80px;height:23.34px;justify-content:center;font-size:8.67px;color:#333;line-height:1;padding-bottom:0.2px">61</div>
<div class="c" style="left:536.30px;top:322.98px;width:55.70px;height:23.34px;justify-content:center;font-size:8.67px;color:#333;line-height:1;padding-bottom:0.2px">95%</div>
<div class="c" style="left:592.00px;top:322.98px;width:56.00px;height:23.34px;justify-content:center;font-size:8.67px;color:#333;line-height:1;padding-bottom:0.2px">50</div>
<div class="c" style="left:648.00px;top:322.98px;width:56.20px;height:23.34px;justify-content:center;font-size:8.67px;color:#333;line-height:1;padding-bottom:0.2px">76%</div>
<div class="c" style="left:704.20px;top:322.98px;width:56.20px;height:23.34px;justify-content:center;font-size:8.67px;color:#333;line-height:1;padding-bottom:0.2px">31回</div>
<div class="c" style="left:760.40px;top:322.98px;width:56.80px;height:23.34px;justify-content:center;font-size:8.67px;color:#333;line-height:1;padding-bottom:0.2px">7回</div>
<div class="c" style="left:817.20px;top:322.98px;width:55.70px;height:23.34px;justify-content:center;font-size:8.67px;color:#333;line-height:1;padding-bottom:0.2px">100%</div>
<div class="c" style="left:872.90px;top:322.98px;width:56.30px;height:23.34px;justify-content:center;font-size:8.67px;color:#333;line-height:1;padding-bottom:0.2px">45</div>
<div class="c" style="left:929.20px;top:322.98px;width:56.80px;height:23.34px;justify-content:center;font-size:8.67px;color:#333;line-height:1;padding-bottom:0.2px">400回</div>
<div class="c" style="left:986.00px;top:322.98px;width:56.80px;height:23.34px;justify-content:center;font-size:8.67px;color:#333;line-height:1;padding-bottom:0.2px">50回</div>
<div class="c" style="left:1042.80px;top:322.98px;width:55.70px;height:23.34px;justify-content:center;font-size:8.67px;color:#333;line-height:1;padding-bottom:0.2px">なし</div>
<div class="c" style="left:1098.50px;top:322.98px;width:55.80px;height:23.34px;justify-content:center;font-size:8.67px;color:#333;line-height:1;padding-bottom:0.2px">68</div>
<div class="a" style="left:648px;top:346.32px;width:56.20px;height:23.34px;background:#f8f8d2"></div>
<div class="a" style="left:986px;top:346.32px;width:56.80px;height:23.34px;background:#f8f8d2"></div>
<div class="a" style="left:1042.8px;top:346.32px;width:55.70px;height:23.34px;background:#f8f8d2"></div>
<div class="a" style="left:1210.6px;top:346.32px;width:56.30px;height:23.34px;background:#ebebeb"></div>
<div class="a" style="left:10px;top:369.15999999999997px;width:1256.90px;height:1.00px;background:#e4e4e4"></div>
<div class="a" style="left:14.8px;top:349.21999999999997px;width:19.30px;height:15.80px;background:#e8e8e8;border-radius:2.5px"></div>
<svg style="left:20.8px;top:351.62px" width="9" height="10" viewBox="0 0 9 10"><circle cx="3.85" cy="2.55" r="2.3" fill="#3a5bcf"/><path d="M0.1,9.6 C0.1,7.1 1.8,5.8 4.15,5.8 C6.5,5.8 8.2,7.1 8.2,9.6 Z" fill="#3a5bcf"/></svg>
<svg style="left:103.7px;top:351.02px" width="11" height="10" viewBox="0 0 11 10"><path transform="scale(0.01823)" d="M546.2 9.7c-5.6-12.5-21.6-13-28.3-1.2C486.9 62.4 431.4 96 368 96h-80C182 96 96 182 96 288c0 7 .8 13.7 1.5 20.5C161.3 262.8 253.4 224 384 224c8.8 0 16 7.2 16 16s-7.2 16-16 16C132.6 256 26 410.1 2.4 468c-6.6 16.3 1.2 34.9 17.5 41.6 16.4 6.8 35-1.1 41.8-17.3 1.5-3.6 20.9-47.9 71.9-90.6 32.4 43.9 94 85.8 174.9 77.2C465.5 467.5 576 326.7 576 154.3c0-50.2-10.8-102.2-29.8-144.6z" fill="#f2f2f2"/></svg>
<div class="c" style="left:37.50px;top:346.32px;width:58.50px;height:23.34px;justify-content:flex-start;padding-left:3.6px;font-size:8.67px;color:#333;line-height:1;padding-bottom:0.2px">s20240002</div>
<div class="c" style="left:121.50px;top:346.32px;width:55.50px;height:23.34px;justify-content:flex-start;padding-left:3.6px;font-size:8.67px;color:#4756d2;line-height:1;padding-bottom:0.2px">学生0002</div>
<div class="c" style="left:210.50px;top:346.32px;width:55.90px;height:23.34px;justify-content:flex-start;padding-left:3.6px;font-size:8.67px;color:#333;line-height:1;padding-bottom:0.2px">理学部</div>
<div class="c" style="left:266.40px;top:346.32px;width:56.60px;height:23.34px;justify-content:flex-start;padding-left:3.6px;font-size:8.67px;color:#333;line-height:1;padding-bottom:0.2px">アドバイザー</div>
<div class="c" style="left:323.00px;top:346.32px;width:56.30px;height:23.34px;justify-content:center;font-size:8.67px;color:#333;line-height:1;padding-bottom:0.2px">2023年</div>
<div class="c" style="left:379.30px;top:346.32px;width:34.00px;height:23.34px;justify-content:center;font-size:8.67px;color:#333;line-height:1;padding-bottom:0.2px">1年</div>
<div class="c" style="left:413.30px;top:346.32px;width:33.00px;height:23.34px;justify-content:center;font-size:8.67px;color:#333;line-height:1;padding-bottom:0.2px">在学中</div>
<div class="c" style="left:446.30px;top:346.32px;width:33.20px;height:23.34px;justify-content:center;font-size:8.67px;color:#333;line-height:1;padding-bottom:0.2px">110</div>
<div class="c" style="left:479.50px;top:346.32px;width:56.80px;height:23.34px;justify-content:center;font-size:8.67px;color:#333;line-height:1;padding-bottom:0.2px">51</div>
<div class="c" style="left:536.30px;top:346.32px;width:55.70px;height:23.34px;justify-content:center;font-size:8.67px;color:#333;line-height:1;padding-bottom:0.2px">95%</div>
<div class="c" style="left:592.00px;top:346.32px;width:56.00px;height:23.34px;justify-content:center;font-size:8.67px;color:#333;line-height:1;padding-bottom:0.2px">47</div>
<div class="c" style="left:648.00px;top:346.32px;width:56.20px;height:23.34px;justify-content:center;font-size:8.67px;color:#333;line-height:1;padding-bottom:0.2px">75%</div>
<div class="c" style="left:704.20px;top:346.32px;width:56.20px;height:23.34px;justify-content:center;font-size:8.67px;color:#333;line-height:1;padding-bottom:0.2px">32回</div>
<div class="c" style="left:760.40px;top:346.32px;width:56.80px;height:23.34px;justify-content:center;font-size:8.67px;color:#333;line-height:1;padding-bottom:0.2px">9回</div>
<div class="c" style="left:817.20px;top:346.32px;width:55.70px;height:23.34px;justify-content:center;font-size:8.67px;color:#333;line-height:1;padding-bottom:0.2px">92%</div>
<div class="c" style="left:872.90px;top:346.32px;width:56.30px;height:23.34px;justify-content:center;font-size:8.67px;color:#333;line-height:1;padding-bottom:0.2px">44</div>
<div class="c" style="left:929.20px;top:346.32px;width:56.80px;height:23.34px;justify-content:center;font-size:8.67px;color:#333;line-height:1;padding-bottom:0.2px">439回</div>
<div class="c" style="left:986.00px;top:346.32px;width:56.80px;height:23.34px;justify-content:center;font-size:8.67px;color:#333;line-height:1;padding-bottom:0.2px">50回</div>
<div class="c" style="left:1042.80px;top:346.32px;width:55.70px;height:23.34px;justify-content:center;font-size:8.67px;color:#333;line-height:1;padding-bottom:0.2px">2回</div>
<div class="c" style="left:1098.50px;top:346.32px;width:55.80px;height:23.34px;justify-content:center;font-size:8.67px;color:#333;line-height:1;padding-bottom:0.2px">63</div>
<div class="c" style="left:1154.30px;top:346.32px;width:56.30px;height:23.34px;justify-content:center;font-size:8.67px;color:#333;line-height:1;padding-bottom:0.2px">67</div>
<div class="a" style="left:986px;top:369.66px;width:56.80px;height:23.34px;background:#f8f8d2"></div>
<div class="a" style="left:1210.6px;top:369.66px;width:56.30px;height:23.34px;background:#ebebeb"></div>
<div class="a" style="left:10px;top:392.5px;width:1256.90px;height:1.00px;background:#e4e4e4"></div>
<div class="a" style="left:14.8px;top:372.56px;width:19.30px;height:15.80px;background:#e8e8e8;border-radius:2.5px"></div>
<svg style="left:20.8px;top:374.96px" width="9" height="10" viewBox="0 0 9 10"><circle cx="3.85" cy="2.55" r="2.3" fill="#3a5bcf"/><path d="M0.1,9.6 C0.1,7.1 1.8,5.8 4.15,5.8 C6.5,5.8 8.2,7.1 8.2,9.6 Z" fill="#3a5bcf"/></svg>
<svg style="left:103.7px;top:374.36px" width="11" height="10" viewBox="0 0 11 10"><path transform="scale(0.01823)" d="M546.2 9.7c-5.6-12.5-21.6-13-28.3-1.2C486.9 62.4 431.4 96 368 96h-80C182 96 96 182 96 288c0 7 .8 13.7 1.5 20.5C161.3 262.8 253.4 224 384 224c8.8 0 16 7.2 16 16s-7.2 16-16 16C132.6 256 26 410.1 2.4 468c-6.6 16.3 1.2 34.9 17.5 41.6 16.4 6.8 35-1.1 41.8-17.3 1.5-3.6 20.9-47.9 71.9-90.6 32.4 43.9 94 85.8 174.9 77.2C465.5 467.5 576 326.7 576 154.3c0-50.2-10.8-102.2-29.8-144.6z" fill="#f2f2f2"/></svg>
<div class="c" style="left:37.50px;top:369.66px;width:58.50px;height:23.34px;justify-content:flex-start;padding-left:3.6px;font-size:8.67px;color:#333;line-height:1;padding-bottom:0.2px">s20240013</div>
<div class="c" style="left:121.50px;top:369.66px;width:55.50px;height:23.34px;justify-content:flex-start;padding-left:3.6px;font-size:8.67px;color:#4756d2;line-height:1;padding-bottom:0.2px">学生0013</div>
<div class="c" style="left:177.00px;top:369.66px;width:33.50px;height:23.34px;justify-content:flex-start;padding-left:3.6px;font-size:8.67px;color:#333;line-height:1;padding-bottom:0.2px">留学生</div>
<div class="c" style="left:210.50px;top:369.66px;width:55.90px;height:23.34px;justify-content:flex-start;padding-left:3.6px;font-size:8.67px;color:#333;line-height:1;padding-bottom:0.2px">理学部</div>
<div class="c" style="left:323.00px;top:369.66px;width:56.30px;height:23.34px;justify-content:center;font-size:8.67px;color:#333;line-height:1;padding-bottom:0.2px">2023年</div>
<div class="c" style="left:379.30px;top:369.66px;width:34.00px;height:23.34px;justify-content:center;font-size:8.67px;color:#333;line-height:1;padding-bottom:0.2px">3年</div>
<div class="c" style="left:413.30px;top:369.66px;width:33.00px;height:23.34px;justify-content:center;font-size:8.67px;color:#333;line-height:1;padding-bottom:0.2px">在学中</div>
<div class="c" style="left:446.30px;top:369.66px;width:33.20px;height:23.34px;justify-content:center;font-size:8.67px;color:#333;line-height:1;padding-bottom:0.2px">98</div>
<div class="c" style="left:479.50px;top:369.66px;width:56.80px;height:23.34px;justify-content:center;font-size:8.67px;color:#333;line-height:1;padding-bottom:0.2px">70</div>
<div class="c" style="left:536.30px;top:369.66px;width:55.70px;height:23.34px;justify-content:center;font-size:8.67px;color:#333;line-height:1;padding-bottom:0.2px">95%</div>
<div class="c" style="left:592.00px;top:369.66px;width:56.00px;height:23.34px;justify-content:center;font-size:8.67px;color:#333;line-height:1;padding-bottom:0.2px">53</div>
<div class="c" style="left:648.00px;top:369.66px;width:56.20px;height:23.34px;justify-content:center;font-size:8.67px;color:#333;line-height:1;padding-bottom:0.2px">84%</div>
<div class="c" style="left:704.20px;top:369.66px;width:56.20px;height:23.34px;justify-content:center;font-size:8.67px;color:#333;line-height:1;padding-bottom:0.2px">20回</div>
<div class="c" style="left:760.40px;top:369.66px;width:56.80px;height:23.34px;justify-content:center;font-size:8.67px;color:#333;line-height:1;padding-bottom:0.2px">なし</div>
<div class="c" style="left:817.20px;top:369.66px;width:55.70px;height:23.34px;justify-content:center;font-size:8.67px;color:#333;line-height:1;padding-bottom:0.2px">94%</div>
<div class="c" style="left:872.90px;top:369.66px;width:56.30px;height:23.34px;justify-content:center;font-size:8.67px;color:#333;line-height:1;padding-bottom:0.2px">49</div>
<div class="c" style="left:929.20px;top:369.66px;width:56.80px;height:23.34px;justify-content:center;font-size:8.67px;color:#333;line-height:1;padding-bottom:0.2px">399回</div>
<div class="c" style="left:986.00px;top:369.66px;width:56.80px;height:23.34px;justify-content:center;font-size:8.67px;color:#333;line-height:1;padding-bottom:0.2px">50回</div>
<div class="c" style="left:1042.80px;top:369.66px;width:55.70px;height:23.34px;justify-content:center;font-size:8.67px;color:#333;line-height:1;padding-bottom:0.2px">なし</div>
<div class="c" style="left:1098.50px;top:369.66px;width:55.80px;height:23.34px;justify-content:center;font-size:8.67px;color:#333;line-height:1;padding-bottom:0.2px">74</div>
<div class="c" style="left:1154.30px;top:369.66px;width:56.30px;height:23.34px;justify-content:center;font-size:8.67px;color:#333;line-height:1;padding-bottom:0.2px">56</div>
<div class="a" style="left:986px;top:393.0px;width:56.80px;height:23.34px;background:#f8f8d2"></div>
<div class="a" style="left:1210.6px;top:393.0px;width:56.30px;height:23.34px;background:#ebebeb"></div>
<div class="a" style="left:10px;top:415.84px;width:1256.90px;height:1.00px;background:#e4e4e4"></div>
<div class="a" style="left:14.8px;top:395.9px;width:19.30px;height:15.80px;background:#e8e8e8;border-radius:2.5px"></div>
<svg style="left:20.8px;top:398.30px" width="9" height="10" viewBox="0 0 9 10"><circle cx="3.85" cy="2.55" r="2.3" fill="#3a5bcf"/><path d="M0.1,9.6 C0.1,7.1 1.8,5.8 4.15,5.8 C6.5,5.8 8.2,7.1 8.2,9.6 Z" fill="#3a5bcf"/></svg>
<svg style="left:103.7px;top:397.70px" width="11" height="10" viewBox="0 0 11 10"><path transform="scale(0.01823)" d="M546.2 9.7c-5.6-12.5-21.6-13-28.3-1.2C486.9 62.4 431.4 96 368 96h-80C182 96 96 182 96 288c0 7 .8 13.7 1.5 20.5C161.3 262.8 253.4 224 384 224c8.8 0 16 7.2 16 16s-7.2 16-16 16C132.6 256 26 410.1 2.4 468c-6.6 16.3 1.2 34.9 17.5 41.6 16.4 6.8 35-1.1 41.8-17.3 1.5-3.6 20.9-47.9 71.9-90.6 32.4 43.9 94 85.8 174.9 77.2C465.5 467.5 576 326.7 576 154.3c0-50.2-10.8-102.2-29.8-144.6z" fill="#f2f2f2"/></svg>
<div class="c" style="left:37.50px;top:393.00px;width:58.50px;height:23.34px;justify-content:flex-start;padding-left:3.6px;font-size:8.67px;color:#333;line-height:1;padding-bottom:0.2px">s20240014</div>
<div class="c" style="left:121.50px;top:393.00px;width:55.50px;height:23.34px;justify-content:flex-start;padding-left:3.6px;font-size:8.67px;color:#4756d2;line-height:1;padding-bottom:0.2px">学生0014</div>
<div class="c" style="left:210.50px;top:393.00px;width:55.90px;height:23.34px;justify-content:flex-start;padding-left:3.6px;font-size:8.67px;color:#333;line-height:1;padding-bottom:0.2px">経済学部</div>
<div class="c" style="left:323.00px;top:393.00px;width:56.30px;height:23.34px;justify-content:center;font-size:8.67px;color:#333;line-height:1;padding-bottom:0.2px">2023年</div>
<div class="c" style="left:379.30px;top:393.00px;width:34.00px;height:23.34px;justify-content:center;font-size:8.67px;color:#333;line-height:1;padding-bottom:0.2px">3年</div>
<div class="c" style="left:413.30px;top:393.00px;width:33.00px;height:23.34px;justify-content:center;font-size:8.67px;color:#333;line-height:1;padding-bottom:0.2px">在学中</div>
<div class="c" style="left:446.30px;top:393.00px;width:33.20px;height:23.34px;justify-content:center;font-size:8.67px;color:#333;line-height:1;padding-bottom:0.2px">96</div>
<div class="c" style="left:479.50px;top:393.00px;width:56.80px;height:23.34px;justify-content:center;font-size:8.67px;color:#333;line-height:1;padding-bottom:0.2px">64</div>
<div class="c" style="left:536.30px;top:393.00px;width:55.70px;height:23.34px;justify-content:center;font-size:8.67px;color:#333;line-height:1;padding-bottom:0.2px">95%</div>
<div class="c" style="left:592.00px;top:393.00px;width:56.00px;height:23.34px;justify-content:center;font-size:8.67px;color:#333;line-height:1;padding-bottom:0.2px">50</div>
<div class="c" style="left:648.00px;top:393.00px;width:56.20px;height:23.34px;justify-content:center;font-size:8.67px;color:#333;line-height:1;padding-bottom:0.2px">92%</div>
<div class="c" style="left:704.20px;top:393.00px;width:56.20px;height:23.34px;justify-content:center;font-size:8.67px;color:#333;line-height:1;padding-bottom:0.2px">10回</div>
<div class="c" style="left:760.40px;top:393.00px;width:56.80px;height:23.34px;justify-content:center;font-size:8.67px;color:#333;line-height:1;padding-bottom:0.2px">なし</div>
<div class="c" style="left:817.20px;top:393.00px;width:55.70px;height:23.34px;justify-content:center;font-size:8.67px;color:#333;line-height:1;padding-bottom:0.2px">95%</div>
<div class="c" style="left:872.90px;top:393.00px;width:56.30px;height:23.34px;justify-content:center;font-size:8.67px;color:#333;line-height:1;padding-bottom:0.2px">59</div>
<div class="c" style="left:929.20px;top:393.00px;width:56.80px;height:23.34px;justify-content:center;font-size:8.67px;color:#333;line-height:1;padding-bottom:0.2px">394回</div>
<div class="c" style="left:986.00px;top:393.00px;width:56.80px;height:23.34px;justify-content:center;font-size:8.67px;color:#333;line-height:1;padding-bottom:0.2px">50回</div>
<div class="c" style="left:1042.80px;top:393.00px;width:55.70px;height:23.34px;justify-content:center;font-size:8.67px;color:#333;line-height:1;padding-bottom:0.2px">なし</div>
<div class="c" style="left:1098.50px;top:393.00px;width:55.80px;height:23.34px;justify-content:center;font-size:8.67px;color:#333;line-height:1;padding-bottom:0.2px">53</div>
<div class="c" style="left:1154.30px;top:393.00px;width:56.30px;height:23.34px;justify-content:center;font-size:8.67px;color:#333;line-height:1;padding-bottom:0.2px">51</div>
<div class="a" style="left:986px;top:416.34000000000003px;width:56.80px;height:23.34px;background:#f8f8d2"></div>
<div class="a" style="left:1210.6px;top:416.34000000000003px;width:56.30px;height:23.34px;background:#ebebeb"></div>
<div class="a" style="left:10px;top:439.18px;width:1256.90px;height:1.00px;background:#e4e4e4"></div>
<div class="a" style="left:14.8px;top:419.24px;width:19.30px;height:15.80px;background:#e8e8e8;border-radius:2.5px"></div>
<svg style="left:20.8px;top:421.64px" width="9" height="10" viewBox="0 0 9 10"><circle cx="3.85" cy="2.55" r="2.3" fill="#3a5bcf"/><path d="M0.1,9.6 C0.1,7.1 1.8,5.8 4.15,5.8 C6.5,5.8 8.2,7.1 8.2,9.6 Z" fill="#3a5bcf"/></svg>
<svg style="left:103.7px;top:421.04px" width="11" height="10" viewBox="0 0 11 10"><path transform="scale(0.01823)" d="M546.2 9.7c-5.6-12.5-21.6-13-28.3-1.2C486.9 62.4 431.4 96 368 96h-80C182 96 96 182 96 288c0 7 .8 13.7 1.5 20.5C161.3 262.8 253.4 224 384 224c8.8 0 16 7.2 16 16s-7.2 16-16 16C132.6 256 26 410.1 2.4 468c-6.6 16.3 1.2 34.9 17.5 41.6 16.4 6.8 35-1.1 41.8-17.3 1.5-3.6 20.9-47.9 71.9-90.6 32.4 43.9 94 85.8 174.9 77.2C465.5 467.5 576 326.7 576 154.3c0-50.2-10.8-102.2-29.8-144.6z" fill="#f2f2f2"/></svg>
<div class="c" style="left:37.50px;top:416.34px;width:58.50px;height:23.34px;justify-content:flex-start;padding-left:3.6px;font-size:8.67px;color:#333;line-height:1;padding-bottom:0.2px">s20240015</div>
<div class="c" style="left:121.50px;top:416.34px;width:55.50px;height:23.34px;justify-content:flex-start;padding-left:3.6px;font-size:8.67px;color:#4756d2;line-height:1;padding-bottom:0.2px">学生0015</div>
<div class="c" style="left:210.50px;top:416.34px;width:55.90px;height:23.34px;justify-content:flex-start;padding-left:3.6px;font-size:8.67px;color:#333;line-height:1;padding-bottom:0.2px">工学部</div>
<div class="c" style="left:323.00px;top:416.34px;width:56.30px;height:23.34px;justify-content:center;font-size:8.67px;color:#333;line-height:1;padding-bottom:0.2px">2023年</div>
<div class="c" style="left:379.30px;top:416.34px;width:34.00px;height:23.34px;justify-content:center;font-size:8.67px;color:#333;line-height:1;padding-bottom:0.2px">3年</div>
<div class="c" style="left:413.30px;top:416.34px;width:33.00px;height:23.34px;justify-content:center;font-size:8.67px;color:#333;line-height:1;padding-bottom:0.2px">在学中</div>
<div class="c" style="left:446.30px;top:416.34px;width:33.20px;height:23.34px;justify-content:center;font-size:8.67px;color:#333;line-height:1;padding-bottom:0.2px">100</div>
<div class="c" style="left:479.50px;top:416.34px;width:56.80px;height:23.34px;justify-content:center;font-size:8.67px;color:#333;line-height:1;padding-bottom:0.2px">67</div>
<div class="c" style="left:536.30px;top:416.34px;width:55.70px;height:23.34px;justify-content:center;font-size:8.67px;color:#333;line-height:1;padding-bottom:0.2px">95%</div>
<div class="c" style="left:592.00px;top:416.34px;width:56.00px;height:23.34px;justify-content:center;font-size:8.67px;color:#333;line-height:1;padding-bottom:0.2px">56</div>
<div class="c" style="left:648.00px;top:416.34px;width:56.20px;height:23.34px;justify-content:center;font-size:8.67px;color:#333;line-height:1;padding-bottom:0.2px">92%</div>
<div class="c" style="left:704.20px;top:416.34px;width:56.20px;height:23.34px;justify-content:center;font-size:8.67px;color:#333;line-height:1;padding-bottom:0.2px">10回</div>
<div class="c" style="left:760.40px;top:416.34px;width:56.80px;height:23.34px;justify-content:center;font-size:8.67px;color:#333;line-height:1;padding-bottom:0.2px">なし</div>
<div class="c" style="left:817.20px;top:416.34px;width:55.70px;height:23.34px;justify-content:center;font-size:8.67px;color:#333;line-height:1;padding-bottom:0.2px">98%</div>
<div class="c" style="left:872.90px;top:416.34px;width:56.30px;height:23.34px;justify-content:center;font-size:8.67px;color:#333;line-height:1;padding-bottom:0.2px">49</div>
<div class="c" style="left:929.20px;top:416.34px;width:56.80px;height:23.34px;justify-content:center;font-size:8.67px;color:#333;line-height:1;padding-bottom:0.2px">400回</div>
<div class="c" style="left:986.00px;top:416.34px;width:56.80px;height:23.34px;justify-content:center;font-size:8.67px;color:#333;line-height:1;padding-bottom:0.2px">50回</div>
<div class="c" style="left:1042.80px;top:416.34px;width:55.70px;height:23.34px;justify-content:center;font-size:8.67px;color:#333;line-height:1;padding-bottom:0.2px">なし</div>
<div class="c" style="left:1098.50px;top:416.34px;width:55.80px;height:23.34px;justify-content:center;font-size:8.67px;color:#333;line-height:1;padding-bottom:0.2px">51</div>
<div class="c" style="left:1154.30px;top:416.34px;width:56.30px;height:23.34px;justify-content:center;font-size:8.67px;color:#333;line-height:1;padding-bottom:0.2px">62</div>
<div class="a" style="left:986px;top:439.68px;width:56.80px;height:23.34px;background:#f8f8d2"></div>
<div class="a" style="left:1210.6px;top:439.68px;width:56.30px;height:23.34px;background:#ebebeb"></div>
<div class="a" style="left:10px;top:462.52px;width:1256.90px;height:1.00px;background:#e4e4e4"></div>
<div class="a" style="left:14.8px;top:442.58px;width:19.30px;height:15.80px;background:#e8e8e8;border-radius:2.5px"></div>
<svg style="left:20.8px;top:444.98px" width="9" height="10" viewBox="0 0 9 10"><circle cx="3.85" cy="2.55" r="2.3" fill="#3a5bcf"/><path d="M0.1,9.6 C0.1,7.1 1.8,5.8 4.15,5.8 C6.5,5.8 8.2,7.1 8.2,9.6 Z" fill="#3a5bcf"/></svg>
<svg style="left:103.7px;top:444.38px" width="11" height="10" viewBox="0 0 11 10"><path transform="scale(0.01823)" d="M546.2 9.7c-5.6-12.5-21.6-13-28.3-1.2C486.9 62.4 431.4 96 368 96h-80C182 96 96 182 96 288c0 7 .8 13.7 1.5 20.5C161.3 262.8 253.4 224 384 224c8.8 0 16 7.2 16 16s-7.2 16-16 16C132.6 256 26 410.1 2.4 468c-6.6 16.3 1.2 34.9 17.5 41.6 16.4 6.8 35-1.1 41.8-17.3 1.5-3.6 20.9-47.9 71.9-90.6 32.4 43.9 94 85.8 174.9 77.2C465.5 467.5 576 326.7 576 154.3c0-50.2-10.8-102.2-29.8-144.6z" fill="#f2f2f2"/></svg>
<div class="c" style="left:37.50px;top:439.68px;width:58.50px;height:23.34px;justify-content:flex-start;padding-left:3.6px;font-size:8.67px;color:#333;line-height:1;padding-bottom:0.2px">s20240019</div>
<div class="c" style="left:121.50px;top:439.68px;width:55.50px;height:23.34px;justify-content:flex-start;padding-left:3.6px;font-size:8.67px;color:#4756d2;line-height:1;padding-bottom:0.2px">学生0019</div>
<div class="c" style="left:210.50px;top:439.68px;width:55.90px;height:23.34px;justify-content:flex-start;padding-left:3.6px;font-size:8.67px;color:#333;line-height:1;padding-bottom:0.2px">文学部</div>
<div class="c" style="left:323.00px;top:439.68px;width:56.30px;height:23.34px;justify-content:center;font-size:8.67px;color:#333;line-height:1;padding-bottom:0.2px">2023年</div>
<div class="c" style="left:379.30px;top:439.68px;width:34.00px;height:23.34px;justify-content:center;font-size:8.67px;color:#333;line-height:1;padding-bottom:0.2px">3年</div>
<div class="c" style="left:413.30px;top:439.68px;width:33.00px;height:23.34px;justify-content:center;font-size:8.67px;color:#333;line-height:1;padding-bottom:0.2px">在学中</div>
<div class="c" style="left:446.30px;top:439.68px;width:33.20px;height:23.34px;justify-content:center;font-size:8.67px;color:#333;line-height:1;padding-bottom:0.2px">94</div>
<div class="c" style="left:479.50px;top:439.68px;width:56.80px;height:23.34px;justify-content:center;font-size:8.67px;color:#333;line-height:1;padding-bottom:0.2px">66</div>
<div class="c" style="left:536.30px;top:439.68px;width:55.70px;height:23.34px;justify-content:center;font-size:8.67px;color:#333;line-height:1;padding-bottom:0.2px">94%</div>
<div class="c" style="left:592.00px;top:439.68px;width:56.00px;height:23.34px;justify-content:center;font-size:8.67px;color:#333;line-height:1;padding-bottom:0.2px">45</div>
<div class="c" style="left:648.00px;top:439.68px;width:56.20px;height:23.34px;justify-content:center;font-size:8.67px;color:#333;line-height:1;padding-bottom:0.2px">93%</div>
<div class="c" style="left:704.20px;top:439.68px;width:56.20px;height:23.34px;justify-content:center;font-size:8.67px;color:#333;line-height:1;padding-bottom:0.2px">8回</div>
<div class="c" style="left:760.40px;top:439.68px;width:56.80px;height:23.34px;justify-content:center;font-size:8.67px;color:#333;line-height:1;padding-bottom:0.2px">なし</div>
<div class="c" style="left:817.20px;top:439.68px;width:55.70px;height:23.34px;justify-content:center;font-size:8.67px;color:#333;line-height:1;padding-bottom:0.2px">97%</div>
<div class="c" style="left:872.90px;top:439.68px;width:56.30px;height:23.34px;justify-content:center;font-size:8.67px;color:#333;line-height:1;padding-bottom:0.2px">51</div>
<div class="c" style="left:929.20px;top:439.68px;width:56.80px;height:23.34px;justify-content:center;font-size:8.67px;color:#333;line-height:1;padding-bottom:0.2px">400回</div>
<div class="c" style="left:986.00px;top:439.68px;width:56.80px;height:23.34px;justify-content:center;font-size:8.67px;color:#333;line-height:1;padding-bottom:0.2px">50回</div>
<div class="c" style="left:1042.80px;top:439.68px;width:55.70px;height:23.34px;justify-content:center;font-size:8.67px;color:#333;line-height:1;padding-bottom:0.2px">なし</div>
<div class="c" style="left:1098.50px;top:439.68px;width:55.80px;height:23.34px;justify-content:center;font-size:8.67px;color:#333;line-height:1;padding-bottom:0.2px">63</div>
<div class="c" style="left:1154.30px;top:439.68px;width:56.30px;height:23.34px;justify-content:center;font-size:8.67px;color:#333;line-height:1;padding-bottom:0.2px">51</div>
<div class="a" style="left:986px;top:463.02px;width:56.80px;height:23.34px;background:#f8f8d2"></div>
<div class="a" style="left:1210.6px;top:463.02px;width:56.30px;height:23.34px;background:#ebebeb"></div>
<div class="a" style="left:10px;top:485.85999999999996px;width:1256.90px;height:1.00px;background:#e4e4e4"></div>
<div class="a" style="left:14.8px;top:465.91999999999996px;width:19.30px;height:15.80px;background:#e8e8e8;border-radius:2.5px"></div>
<svg style="left:20.8px;top:468.32px" width="9" height="10" viewBox="0 0 9 10"><circle cx="3.85" cy="2.55" r="2.3" fill="#3a5bcf"/><path d="M0.1,9.6 C0.1,7.1 1.8,5.8 4.15,5.8 C6.5,5.8 8.2,7.1 8.2,9.6 Z" fill="#3a5bcf"/></svg>
<svg style="left:103.7px;top:467.72px" width="11" height="10" viewBox="0 0 11 10"><path transform="scale(0.01823)" d="M546.2 9.7c-5.6-12.5-21.6-13-28.3-1.2C486.9 62.4 431.4 96 368 96h-80C182 96 96 182 96 288c0 7 .8 13.7 1.5 20.5C161.3 262.8 253.4 224 384 224c8.8 0 16 7.2 16 16s-7.2 16-16 16C132.6 256 26 410.1 2.4 468c-6.6 16.3 1.2 34.9 17.5 41.6 16.4 6.8 35-1.1 41.8-17.3 1.5-3.6 20.9-47.9 71.9-90.6 32.4 43.9 94 85.8 174.9 77.2C465.5 467.5 576 326.7 576 154.3c0-50.2-10.8-102.2-29.8-144.6z" fill="#f2f2f2"/></svg>
<div class="c" style="left:37.50px;top:463.02px;width:58.50px;height:23.34px;justify-content:flex-start;padding-left:3.6px;font-size:8.67px;color:#333;line-height:1;padding-bottom:0.2px">s20240009</div>
<div class="c" style="left:121.50px;top:463.02px;width:55.50px;height:23.34px;justify-content:flex-start;padding-left:3.6px;font-size:8.67px;color:#4756d2;line-height:1;padding-bottom:0.2px">学生0009</div>
<div class="c" style="left:177.00px;top:463.02px;width:33.50px;height:23.34px;justify-content:flex-start;padding-left:3.6px;font-size:8.67px;color:#333;line-height:1;padding-bottom:0.2px">留学生</div>
<div class="c" style="left:210.50px;top:463.02px;width:55.90px;height:23.34px;justify-content:flex-start;padding-left:3.6px;font-size:8.67px;color:#333;line-height:1;padding-bottom:0.2px">工学部</div>
<div class="c" style="left:323.00px;top:463.02px;width:56.30px;height:23.34px;justify-content:center;font-size:8.67px;color:#333;line-height:1;padding-bottom:0.2px">2023年</div>
<div class="c" style="left:379.30px;top:463.02px;width:34.00px;height:23.34px;justify-content:center;font-size:8.67px;color:#333;line-height:1;padding-bottom:0.2px">3年</div>
<div class="c" style="left:413.30px;top:463.02px;width:33.00px;height:23.34px;justify-content:center;font-size:8.67px;color:#333;line-height:1;padding-bottom:0.2px">在学中</div>
<div class="c" style="left:446.30px;top:463.02px;width:33.20px;height:23.34px;justify-content:center;font-size:8.67px;color:#333;line-height:1;padding-bottom:0.2px">98</div>
<div class="c" style="left:479.50px;top:463.02px;width:56.80px;height:23.34px;justify-content:center;font-size:8.67px;color:#333;line-height:1;padding-bottom:0.2px">69</div>
<div class="c" style="left:536.30px;top:463.02px;width:55.70px;height:23.34px;justify-content:center;font-size:8.67px;color:#333;line-height:1;padding-bottom:0.2px">94%</div>
<div class="c" style="left:592.00px;top:463.02px;width:56.00px;height:23.34px;justify-content:center;font-size:8.67px;color:#333;line-height:1;padding-bottom:0.2px">42</div>
<div class="c" style="left:648.00px;top:463.02px;width:56.20px;height:23.34px;justify-content:center;font-size:8.67px;color:#333;line-height:1;padding-bottom:0.2px">100%</div>
<div class="c" style="left:704.20px;top:463.02px;width:56.20px;height:23.34px;justify-content:center;font-size:8.67px;color:#333;line-height:1;padding-bottom:0.2px">0回</div>
<div class="c" style="left:760.40px;top:463.02px;width:56.80px;height:23.34px;justify-content:center;font-size:8.67px;color:#333;line-height:1;padding-bottom:0.2px">なし</div>
<div class="c" style="left:817.20px;top:463.02px;width:55.70px;height:23.34px;justify-content:center;font-size:8.67px;color:#333;line-height:1;padding-bottom:0.2px">94%</div>
<div class="c" style="left:872.90px;top:463.02px;width:56.30px;height:23.34px;justify-content:center;font-size:8.67px;color:#333;line-height:1;padding-bottom:0.2px">42</div>
<div class="c" style="left:929.20px;top:463.02px;width:56.80px;height:23.34px;justify-content:center;font-size:8.67px;color:#333;line-height:1;padding-bottom:0.2px">405回</div>
<div class="c" style="left:986.00px;top:463.02px;width:56.80px;height:23.34px;justify-content:center;font-size:8.67px;color:#333;line-height:1;padding-bottom:0.2px">50回</div>
<div class="c" style="left:1042.80px;top:463.02px;width:55.70px;height:23.34px;justify-content:center;font-size:8.67px;color:#333;line-height:1;padding-bottom:0.2px">なし</div>
<div class="c" style="left:1098.50px;top:463.02px;width:55.80px;height:23.34px;justify-content:center;font-size:8.67px;color:#333;line-height:1;padding-bottom:0.2px">54</div>
<div class="c" style="left:1154.30px;top:463.02px;width:56.30px;height:23.34px;justify-content:center;font-size:8.67px;color:#333;line-height:1;padding-bottom:0.2px">67</div>
<div class="a" style="left:986px;top:486.36px;width:56.80px;height:23.34px;background:#f8f8d2"></div>
<div class="a" style="left:1210.6px;top:486.36px;width:56.30px;height:23.34px;background:#ebebeb"></div>
<div class="a" style="left:10px;top:509.2px;width:1256.90px;height:1.00px;background:#e4e4e4"></div>
<div class="a" style="left:14.8px;top:489.26px;width:19.30px;height:15.80px;background:#e8e8e8;border-radius:2.5px"></div>
<svg style="left:20.8px;top:491.66px" width="9" height="10" viewBox="0 0 9 10"><circle cx="3.85" cy="2.55" r="2.3" fill="#3a5bcf"/><path d="M0.1,9.6 C0.1,7.1 1.8,5.8 4.15,5.8 C6.5,5.8 8.2,7.1 8.2,9.6 Z" fill="#3a5bcf"/></svg>
<svg style="left:103.7px;top:491.06px" width="11" height="10" viewBox="0 0 11 10"><path transform="scale(0.01823)" d="M546.2 9.7c-5.6-12.5-21.6-13-28.3-1.2C486.9 62.4 431.4 96 368 96h-80C182 96 96 182 96 288c0 7 .8 13.7 1.5 20.5C161.3 262.8 253.4 224 384 224c8.8 0 16 7.2 16 16s-7.2 16-16 16C132.6 256 26 410.1 2.4 468c-6.6 16.3 1.2 34.9 17.5 41.6 16.4 6.8 35-1.1 41.8-17.3 1.5-3.6 20.9-47.9 71.9-90.6 32.4 43.9 94 85.8 174.9 77.2C465.5 467.5 576 326.7 576 154.3c0-50.2-10.8-102.2-29.8-144.6z" fill="#f2f2f2"/></svg>
<div class="c" style="left:37.50px;top:486.36px;width:58.50px;height:23.34px;justify-content:flex-start;padding-left:3.6px;font-size:8.67px;color:#333;line-height:1;padding-bottom:0.2px">s20240003</div>
<div class="c" style="left:121.50px;top:486.36px;width:55.50px;height:23.34px;justify-content:flex-start;padding-left:3.6px;font-size:8.67px;color:#4756d2;line-height:1;padding-bottom:0.2px">学生0003</div>
<div class="c" style="left:177.00px;top:486.36px;width:33.50px;height:23.34px;justify-content:flex-start;padding-left:3.6px;font-size:8.67px;color:#333;line-height:1;padding-bottom:0.2px">留学生</div>
<div class="c" style="left:210.50px;top:486.36px;width:55.90px;height:23.34px;justify-content:flex-start;padding-left:3.6px;font-size:8.67px;color:#333;line-height:1;padding-bottom:0.2px">工学部</div>
<div class="c" style="left:266.40px;top:486.36px;width:56.60px;height:23.34px;justify-content:flex-start;padding-left:3.6px;font-size:8.67px;color:#333;line-height:1;padding-bottom:0.2px">研究室所属</div>
<div class="c" style="left:323.00px;top:486.36px;width:56.30px;height:23.34px;justify-content:center;font-size:8.67px;color:#333;line-height:1;padding-bottom:0.2px">2023年</div>
<div class="c" style="left:379.30px;top:486.36px;width:34.00px;height:23.34px;justify-content:center;font-size:8.67px;color:#333;line-height:1;padding-bottom:0.2px">3年</div>
<div class="c" style="left:413.30px;top:486.36px;width:33.00px;height:23.34px;justify-content:center;font-size:8.67px;color:#333;line-height:1;padding-bottom:0.2px">在学中</div>
<div class="c" style="left:446.30px;top:486.36px;width:33.20px;height:23.34px;justify-content:center;font-size:8.67px;color:#333;line-height:1;padding-bottom:0.2px">110</div>
<div class="c" style="left:479.50px;top:486.36px;width:56.80px;height:23.34px;justify-content:center;font-size:8.67px;color:#333;line-height:1;padding-bottom:0.2px">59</div>
<div class="c" style="left:536.30px;top:486.36px;width:55.70px;height:23.34px;justify-content:center;font-size:8.67px;color:#333;line-height:1;padding-bottom:0.2px">94%</div>
<div class="c" style="left:592.00px;top:486.36px;width:56.00px;height:23.34px;justify-content:center;font-size:8.67px;color:#333;line-height:1;padding-bottom:0.2px">41</div>
<div class="c" style="left:648.00px;top:486.36px;width:56.20px;height:23.34px;justify-content:center;font-size:8.67px;color:#333;line-height:1;padding-bottom:0.2px">86%</div>
<div class="c" style="left:704.20px;top:486.36px;width:56.20px;height:23.34px;justify-content:center;font-size:8.67px;color:#333;line-height:1;padding-bottom:0.2px">18回</div>
<div class="c" style="left:760.40px;top:486.36px;width:56.80px;height:23.34px;justify-content:center;font-size:8.67px;color:#333;line-height:1;padding-bottom:0.2px">なし</div>
<div class="c" style="left:817.20px;top:486.36px;width:55.70px;height:23.34px;justify-content:center;font-size:8.67px;color:#333;line-height:1;padding-bottom:0.2px">97%</div>
<div class="c" style="left:872.90px;top:486.36px;width:56.30px;height:23.34px;justify-content:center;font-size:8.67px;color:#333;line-height:1;padding-bottom:0.2px">53</div>
<div class="c" style="left:929.20px;top:486.36px;width:56.80px;height:23.34px;justify-content:center;font-size:8.67px;color:#333;line-height:1;padding-bottom:0.2px">395回</div>
<div class="c" style="left:986.00px;top:486.36px;width:56.80px;height:23.34px;justify-content:center;font-size:8.67px;color:#333;line-height:1;padding-bottom:0.2px">50回</div>
<div class="c" style="left:1042.80px;top:486.36px;width:55.70px;height:23.34px;justify-content:center;font-size:8.67px;color:#333;line-height:1;padding-bottom:0.2px">なし</div>
<div class="c" style="left:1098.50px;top:486.36px;width:55.80px;height:23.34px;justify-content:center;font-size:8.67px;color:#333;line-height:1;padding-bottom:0.2px">51</div>
<div class="c" style="left:1154.30px;top:486.36px;width:56.30px;height:23.34px;justify-content:center;font-size:8.67px;color:#333;line-height:1;padding-bottom:0.2px">52</div>
<div class="a" style="left:986px;top:509.70000000000005px;width:56.80px;height:23.34px;background:#f8f8d2"></div>
<div class="a" style="left:1098.5px;top:509.70000000000005px;width:55.80px;height:23.34px;background:#ebebeb"></div>
<div class="a" style="left:1210.6px;top:509.70000000000005px;width:56.30px;height:23.34px;background:#ebebeb"></div>
<div class="a" style="left:10px;top:532.5400000000001px;width:1256.90px;height:1.00px;background:#e4e4e4"></div>
<div class="a" style="left:14.8px;top:512.6px;width:19.30px;height:15.80px;background:#e8e8e8;border-radius:2.5px"></div>
<svg style="left:20.8px;top:515.00px" width="9" height="10" viewBox="0 0 9 10"><circle cx="3.85" cy="2.55" r="2.3" fill="#3a5bcf"/><path d="M0.1,9.6 C0.1,7.1 1.8,5.8 4.15,5.8 C6.5,5.8 8.2,7.1 8.2,9.6 Z" fill="#3a5bcf"/></svg>
<svg style="left:103.7px;top:514.40px" width="11" height="10" viewBox="0 0 11 10"><path transform="scale(0.01823)" d="M546.2 9.7c-5.6-12.5-21.6-13-28.3-1.2C486.9 62.4 431.4 96 368 96h-80C182 96 96 182 96 288c0 7 .8 13.7 1.5 20.5C161.3 262.8 253.4 224 384 224c8.8 0 16 7.2 16 16s-7.2 16-16 16C132.6 256 26 410.1 2.4 468c-6.6 16.3 1.2 34.9 17.5 41.6 16.4 6.8 35-1.1 41.8-17.3 1.5-3.6 20.9-47.9 71.9-90.6 32.4 43.9 94 85.8 174.9 77.2C465.5 467.5 576 326.7 576 154.3c0-50.2-10.8-102.2-29.8-144.6z" fill="#f2f2f2"/></svg>
<div class="c" style="left:37.50px;top:509.70px;width:58.50px;height:23.34px;justify-content:flex-start;padding-left:3.6px;font-size:8.67px;color:#333;line-height:1;padding-bottom:0.2px">s20240010</div>
<div class="c" style="left:121.50px;top:509.70px;width:55.50px;height:23.34px;justify-content:flex-start;padding-left:3.6px;font-size:8.67px;color:#4756d2;line-height:1;padding-bottom:0.2px">学生0010</div>
<div class="c" style="left:210.50px;top:509.70px;width:55.90px;height:23.34px;justify-content:flex-start;padding-left:3.6px;font-size:8.67px;color:#333;line-height:1;padding-bottom:0.2px">法学部</div>
<div class="c" style="left:323.00px;top:509.70px;width:56.30px;height:23.34px;justify-content:center;font-size:8.67px;color:#333;line-height:1;padding-bottom:0.2px">2023年</div>
<div class="c" style="left:379.30px;top:509.70px;width:34.00px;height:23.34px;justify-content:center;font-size:8.67px;color:#333;line-height:1;padding-bottom:0.2px">3年</div>
<div class="c" style="left:413.30px;top:509.70px;width:33.00px;height:23.34px;justify-content:center;font-size:8.67px;color:#333;line-height:1;padding-bottom:0.2px">在学中</div>
<div class="c" style="left:446.30px;top:509.70px;width:33.20px;height:23.34px;justify-content:center;font-size:8.67px;color:#333;line-height:1;padding-bottom:0.2px">95</div>
<div class="c" style="left:479.50px;top:509.70px;width:56.80px;height:23.34px;justify-content:center;font-size:8.67px;color:#333;line-height:1;padding-bottom:0.2px">73</div>
<div class="c" style="left:536.30px;top:509.70px;width:55.70px;height:23.34px;justify-content:center;font-size:8.67px;color:#333;line-height:1;padding-bottom:0.2px">94%</div>
<div class="c" style="left:592.00px;top:509.70px;width:56.00px;height:23.34px;justify-content:center;font-size:8.67px;color:#333;line-height:1;padding-bottom:0.2px">50</div>
<div class="c" style="left:648.00px;top:509.70px;width:56.20px;height:23.34px;justify-content:center;font-size:8.67px;color:#333;line-height:1;padding-bottom:0.2px">92%</div>
<div class="c" style="left:704.20px;top:509.70px;width:56.20px;height:23.34px;justify-content:center;font-size:8.67px;color:#333;line-height:1;padding-bottom:0.2px">10回</div>
<div class="c" style="left:760.40px;top:509.70px;width:56.80px;height:23.34px;justify-content:center;font-size:8.67px;color:#333;line-height:1;padding-bottom:0.2px">なし</div>
<div class="c" style="left:817.20px;top:509.70px;width:55.70px;height:23.34px;justify-content:center;font-size:8.67px;color:#333;line-height:1;padding-bottom:0.2px">94%</div>
<div class="c" style="left:872.90px;top:509.70px;width:56.30px;height:23.34px;justify-content:center;font-size:8.67px;color:#333;line-height:1;padding-bottom:0.2px">46</div>
<div class="c" style="left:929.20px;top:509.70px;width:56.80px;height:23.34px;justify-content:center;font-size:8.67px;color:#333;line-height:1;padding-bottom:0.2px">404回</div>
<div class="c" style="left:986.00px;top:509.70px;width:56.80px;height:23.34px;justify-content:center;font-size:8.67px;color:#333;line-height:1;padding-bottom:0.2px">50回</div>
<div class="c" style="left:1042.80px;top:509.70px;width:55.70px;height:23.34px;justify-content:center;font-size:8.67px;color:#333;line-height:1;padding-bottom:0.2px">なし</div>
<div class="c" style="left:1154.30px;top:509.70px;width:56.30px;height:23.34px;justify-content:center;font-size:8.67px;color:#333;line-height:1;padding-bottom:0.2px">66</div>
<div class="a" style="left:986px;top:533.04px;width:56.80px;height:23.34px;background:#f8f8d2"></div>
<div class="a" style="left:1210.6px;top:533.04px;width:56.30px;height:23.34px;background:#ebebeb"></div>
<div class="a" style="left:10px;top:555.88px;width:1256.90px;height:1.00px;background:#e4e4e4"></div>
<div class="a" style="left:14.8px;top:535.9399999999999px;width:19.30px;height:15.80px;background:#e8e8e8;border-radius:2.5px"></div>
<svg style="left:20.8px;top:538.34px" width="9" height="10" viewBox="0 0 9 10"><circle cx="3.85" cy="2.55" r="2.3" fill="#3a5bcf"/><path d="M0.1,9.6 C0.1,7.1 1.8,5.8 4.15,5.8 C6.5,5.8 8.2,7.1 8.2,9.6 Z" fill="#3a5bcf"/></svg>
<svg style="left:103.7px;top:537.74px" width="11" height="10" viewBox="0 0 11 10"><path transform="scale(0.01823)" d="M546.2 9.7c-5.6-12.5-21.6-13-28.3-1.2C486.9 62.4 431.4 96 368 96h-80C182 96 96 182 96 288c0 7 .8 13.7 1.5 20.5C161.3 262.8 253.4 224 384 224c8.8 0 16 7.2 16 16s-7.2 16-16 16C132.6 256 26 410.1 2.4 468c-6.6 16.3 1.2 34.9 17.5 41.6 16.4 6.8 35-1.1 41.8-17.3 1.5-3.6 20.9-47.9 71.9-90.6 32.4 43.9 94 85.8 174.9 77.2C465.5 467.5 576 326.7 576 154.3c0-50.2-10.8-102.2-29.8-144.6z" fill="#f2f2f2"/></svg>
<div class="c" style="left:37.50px;top:533.04px;width:58.50px;height:23.34px;justify-content:flex-start;padding-left:3.6px;font-size:8.67px;color:#333;line-height:1;padding-bottom:0.2px">s20240016</div>
<div class="c" style="left:121.50px;top:533.04px;width:55.50px;height:23.34px;justify-content:flex-start;padding-left:3.6px;font-size:8.67px;color:#4756d2;line-height:1;padding-bottom:0.2px">学生0016</div>
<div class="c" style="left:177.00px;top:533.04px;width:33.50px;height:23.34px;justify-content:flex-start;padding-left:3.6px;font-size:8.67px;color:#333;line-height:1;padding-bottom:0.2px">留学生</div>
<div class="c" style="left:210.50px;top:533.04px;width:55.90px;height:23.34px;justify-content:flex-start;padding-left:3.6px;font-size:8.67px;color:#333;line-height:1;padding-bottom:0.2px">経済学部</div>
<div class="c" style="left:323.00px;top:533.04px;width:56.30px;height:23.34px;justify-content:center;font-size:8.67px;color:#333;line-height:1;padding-bottom:0.2px">2023年</div>
<div class="c" style="left:379.30px;top:533.04px;width:34.00px;height:23.34px;justify-content:center;font-size:8.67px;color:#333;line-height:1;padding-bottom:0.2px">3年</div>
<div class="c" style="left:413.30px;top:533.04px;width:33.00px;height:23.34px;justify-content:center;font-size:8.67px;color:#333;line-height:1;padding-bottom:0.2px">在学中</div>
<div class="c" style="left:446.30px;top:533.04px;width:33.20px;height:23.34px;justify-content:center;font-size:8.67px;color:#333;line-height:1;padding-bottom:0.2px">112</div>
<div class="c" style="left:479.50px;top:533.04px;width:56.80px;height:23.34px;justify-content:center;font-size:8.67px;color:#333;line-height:1;padding-bottom:0.2px">74</div>
<div class="c" style="left:536.30px;top:533.04px;width:55.70px;height:23.34px;justify-content:center;font-size:8.67px;color:#333;line-height:1;padding-bottom:0.2px">94%</div>
<div class="c" style="left:592.00px;top:533.04px;width:56.00px;height:23.34px;justify-content:center;font-size:8.67px;color:#333;line-height:1;padding-bottom:0.2px">50</div>
<div class="c" style="left:648.00px;top:533.04px;width:56.20px;height:23.34px;justify-content:center;font-size:8.67px;color:#333;line-height:1;padding-bottom:0.2px">100%</div>
<div class="c" style="left:704.20px;top:533.04px;width:56.20px;height:23.34px;justify-content:center;font-size:8.67px;color:#333;line-height:1;padding-bottom:0.2px">0回</div>
<div class="c" style="left:760.40px;top:533.04px;width:56.80px;height:23.34px;justify-content:center;font-size:8.67px;color:#333;line-height:1;padding-bottom:0.2px">なし</div>
<div class="c" style="left:817.20px;top:533.04px;width:55.70px;height:23.34px;justify-content:center;font-size:8.67px;color:#333;line-height:1;padding-bottom:0.2px">98%</div>
<div class="c" style="left:872.90px;top:533.04px;width:56.30px;height:23.34px;justify-content:center;font-size:8.67px;color:#333;line-height:1;padding-bottom:0.2px">50</div>
<div class="c" style="left:929.20px;top:533.04px;width:56.80px;height:23.34px;justify-content:center;font-size:8.67px;color:#333;line-height:1;padding-bottom:0.2px">393回</div>
<div class="c" style="left:986.00px;top:533.04px;width:56.80px;height:23.34px;justify-content:center;font-size:8.67px;color:#333;line-height:1;padding-bottom:0.2px">50回</div>
<div class="c" style="left:1042.80px;top:533.04px;width:55.70px;height:23.34px;justify-content:center;font-size:8.67px;color:#333;line-height:1;padding-bottom:0.2px">なし</div>
<div class="c" style="left:1098.50px;top:533.04px;width:55.80px;height:23.34px;justify-content:center;font-size:8.67px;color:#333;line-height:1;padding-bottom:0.2px">66</div>
<div class="c" style="left:1154.30px;top:533.04px;width:56.30px;height:23.34px;justify-content:center;font-size:8.67px;color:#333;line-height:1;padding-bottom:0.2px">62</div>
<div class="a" style="left:986px;top:556.38px;width:56.80px;height:23.34px;background:#f8f8d2"></div>
<div class="a" style="left:1210.6px;top:556.38px;width:56.30px;height:23.34px;background:#ebebeb"></div>
<div class="a" style="left:10px;top:579.22px;width:1256.90px;height:1.00px;background:#e4e4e4"></div>
<div class="a" style="left:14.8px;top:559.28px;width:19.30px;height:15.80px;background:#e8e8e8;border-radius:2.5px"></div>
<svg style="left:20.8px;top:561.68px" width="9" height="10" viewBox="0 0 9 10"><circle cx="3.85" cy="2.55" r="2.3" fill="#3a5bcf"/><path d="M0.1,9.6 C0.1,7.1 1.8,5.8 4.15,5.8 C6.5,5.8 8.2,7.1 8.2,9.6 Z" fill="#3a5bcf"/></svg>
<svg style="left:103.7px;top:561.08px" width="11" height="10" viewBox="0 0 11 10"><path transform="scale(0.01823)" d="M546.2 9.7c-5.6-12.5-21.6-13-28.3-1.2C486.9 62.4 431.4 96 368 96h-80C182 96 96 182 96 288c0 7 .8 13.7 1.5 20.5C161.3 262.8 253.4 224 384 224c8.8 0 16 7.2 16 16s-7.2 16-16 16C132.6 256 26 410.1 2.4 468c-6.6 16.3 1.2 34.9 17.5 41.6 16.4 6.8 35-1.1 41.8-17.3 1.5-3.6 20.9-47.9 71.9-90.6 32.4 43.9 94 85.8 174.9 77.2C465.5 467.5 576 326.7 576 154.3c0-50.2-10.8-102.2-29.8-144.6z" fill="#f2f2f2"/></svg>
<div class="c" style="left:37.50px;top:556.38px;width:58.50px;height:23.34px;justify-content:flex-start;padding-left:3.6px;font-size:8.67px;color:#333;line-height:1;padding-bottom:0.2px">s20240020</div>
<div class="c" style="left:121.50px;top:556.38px;width:55.50px;height:23.34px;justify-content:flex-start;padding-left:3.6px;font-size:8.67px;color:#4756d2;line-height:1;padding-bottom:0.2px">学生0020</div>
<div class="c" style="left:210.50px;top:556.38px;width:55.90px;height:23.34px;justify-content:flex-start;padding-left:3.6px;font-size:8.67px;color:#333;line-height:1;padding-bottom:0.2px">工学部</div>
<div class="c" style="left:323.00px;top:556.38px;width:56.30px;height:23.34px;justify-content:center;font-size:8.67px;color:#333;line-height:1;padding-bottom:0.2px">2023年</div>
<div class="c" style="left:379.30px;top:556.38px;width:34.00px;height:23.34px;justify-content:center;font-size:8.67px;color:#333;line-height:1;padding-bottom:0.2px">3年</div>
<div class="c" style="left:413.30px;top:556.38px;width:33.00px;height:23.34px;justify-content:center;font-size:8.67px;color:#333;line-height:1;padding-bottom:0.2px">在学中</div>
<div class="c" style="left:446.30px;top:556.38px;width:33.20px;height:23.34px;justify-content:center;font-size:8.67px;color:#333;line-height:1;padding-bottom:0.2px">107</div>
<div class="c" style="left:479.50px;top:556.38px;width:56.80px;height:23.34px;justify-content:center;font-size:8.67px;color:#333;line-height:1;padding-bottom:0.2px">71</div>
<div class="c" style="left:536.30px;top:556.38px;width:55.70px;height:23.34px;justify-content:center;font-size:8.67px;color:#333;line-height:1;padding-bottom:0.2px">93%</div>
<div class="c" style="left:592.00px;top:556.38px;width:56.00px;height:23.34px;justify-content:center;font-size:8.67px;color:#333;line-height:1;padding-bottom:0.2px">53</div>
<div class="c" style="left:648.00px;top:556.38px;width:56.20px;height:23.34px;justify-content:center;font-size:8.67px;color:#333;line-height:1;padding-bottom:0.2px">87%</div>
<div class="c" style="left:704.20px;top:556.38px;width:56.20px;height:23.34px;justify-content:center;font-size:8.67px;color:#333;line-height:1;padding-bottom:0.2px">16回</div>
<div class="c" style="left:760.40px;top:556.38px;width:56.80px;height:23.34px;justify-content:center;font-size:8.67px;color:#333;line-height:1;padding-bottom:0.2px">なし</div>
<div class="c" style="left:817.20px;top:556.38px;width:55.70px;height:23.34px;justify-content:center;font-size:8.67px;color:#333;line-height:1;padding-bottom:0.2px">98%</div>
<div class="c" style="left:872.90px;top:556.38px;width:56.30px;height:23.34px;justify-content:center;font-size:8.67px;color:#333;line-height:1;padding-bottom:0.2px">46</div>
<div class="c" style="left:929.20px;top:556.38px;width:56.80px;height:23.34px;justify-content:center;font-size:8.67px;color:#333;line-height:1;padding-bottom:0.2px">421回</div>
<div class="c" style="left:986.00px;top:556.38px;width:56.80px;height:23.34px;justify-content:center;font-size:8.67px;color:#333;line-height:1;padding-bottom:0.2px">50回</div>
<div class="c" style="left:1042.80px;top:556.38px;width:55.70px;height:23.34px;justify-content:center;font-size:8.67px;color:#333;line-height:1;padding-bottom:0.2px">なし</div>
<div class="c" style="left:1098.50px;top:556.38px;width:55.80px;height:23.34px;justify-content:center;font-size:8.67px;color:#333;line-height:1;padding-bottom:0.2px">74</div>
<div class="c" style="left:1154.30px;top:556.38px;width:56.30px;height:23.34px;justify-content:center;font-size:8.67px;color:#333;line-height:1;padding-bottom:0.2px">53</div>
<div class="a" style="left:986px;top:579.72px;width:56.80px;height:23.34px;background:#f8f8d2"></div>
<div class="a" style="left:1210.6px;top:579.72px;width:56.30px;height:23.34px;background:#ebebeb"></div>
<div class="a" style="left:10px;top:602.5600000000001px;width:1256.90px;height:1.00px;background:#e4e4e4"></div>
<div class="a" style="left:14.8px;top:582.62px;width:19.30px;height:15.80px;background:#e8e8e8;border-radius:2.5px"></div>
<svg style="left:20.8px;top:585.02px" width="9" height="10" viewBox="0 0 9 10"><circle cx="3.85" cy="2.55" r="2.3" fill="#3a5bcf"/><path d="M0.1,9.6 C0.1,7.1 1.8,5.8 4.15,5.8 C6.5,5.8 8.2,7.1 8.2,9.6 Z" fill="#3a5bcf"/></svg>
<svg style="left:103.7px;top:584.42px" width="11" height="10" viewBox="0 0 11 10"><path transform="scale(0.01823)" d="M546.2 9.7c-5.6-12.5-21.6-13-28.3-1.2C486.9 62.4 431.4 96 368 96h-80C182 96 96 182 96 288c0 7 .8 13.7 1.5 20.5C161.3 262.8 253.4 224 384 224c8.8 0 16 7.2 16 16s-7.2 16-16 16C132.6 256 26 410.1 2.4 468c-6.6 16.3 1.2 34.9 17.5 41.6 16.4 6.8 35-1.1 41.8-17.3 1.5-3.6 20.9-47.9 71.9-90.6 32.4 43.9 94 85.8 174.9 77.2C465.5 467.5 576 326.7 576 154.3c0-50.2-10.8-102.2-29.8-144.6z" fill="#f2f2f2"/></svg>
<div class="c" style="left:37.50px;top:579.72px;width:58.50px;height:23.34px;justify-content:flex-start;padding-left:3.6px;font-size:8.67px;color:#333;line-height:1;padding-bottom:0.2px">s20240006</div>
<div class="c" style="left:121.50px;top:579.72px;width:55.50px;height:23.34px;justify-content:flex-start;padding-left:3.6px;font-size:8.67px;color:#4756d2;line-height:1;padding-bottom:0.2px">学生0006</div>
<div class="c" style="left:177.00px;top:579.72px;width:33.50px;height:23.34px;justify-content:flex-start;padding-left:3.6px;font-size:8.67px;color:#333;line-height:1;padding-bottom:0.2px">留学生</div>
<div class="c" style="left:210.50px;top:579.72px;width:55.90px;height:23.34px;justify-content:flex-start;padding-left:3.6px;font-size:8.67px;color:#333;line-height:1;padding-bottom:0.2px">工学部</div>
<div class="c" style="left:323.00px;top:579.72px;width:56.30px;height:23.34px;justify-content:center;font-size:8.67px;color:#333;line-height:1;padding-bottom:0.2px">2023年</div>
<div class="c" style="left:379.30px;top:579.72px;width:34.00px;height:23.34px;justify-content:center;font-size:8.67px;color:#333;line-height:1;padding-bottom:0.2px">3年</div>
<div class="c" style="left:413.30px;top:579.72px;width:33.00px;height:23.34px;justify-content:center;font-size:8.67px;color:#333;line-height:1;padding-bottom:0.2px">在学中</div>
<div class="c" style="left:446.30px;top:579.72px;width:33.20px;height:23.34px;justify-content:center;font-size:8.67px;color:#333;line-height:1;padding-bottom:0.2px">93</div>
<div class="c" style="left:479.50px;top:579.72px;width:56.80px;height:23.34px;justify-content:center;font-size:8.67px;color:#333;line-height:1;padding-bottom:0.2px">64</div>
<div class="c" style="left:536.30px;top:579.72px;width:55.70px;height:23.34px;justify-content:center;font-size:8.67px;color:#333;line-height:1;padding-bottom:0.2px">93%</div>
<div class="c" style="left:592.00px;top:579.72px;width:56.00px;height:23.34px;justify-content:center;font-size:8.67px;color:#333;line-height:1;padding-bottom:0.2px">49</div>
<div class="c" style="left:648.00px;top:579.72px;width:56.20px;height:23.34px;justify-content:center;font-size:8.67px;color:#333;line-height:1;padding-bottom:0.2px">90%</div>
<div class="c" style="left:704.20px;top:579.72px;width:56.20px;height:23.34px;justify-content:center;font-size:8.67px;color:#333;line-height:1;padding-bottom:0.2px">12回</div>
<div class="c" style="left:760.40px;top:579.72px;width:56.80px;height:23.34px;justify-content:center;font-size:8.67px;color:#333;line-height:1;padding-bottom:0.2px">なし</div>
<div class="c" style="left:817.20px;top:579.72px;width:55.70px;height:23.34px;justify-content:center;font-size:8.67px;color:#333;line-height:1;padding-bottom:0.2px">100%</div>
<div class="c" style="left:872.90px;top:579.72px;width:56.30px;height:23.34px;justify-content:center;font-size:8.67px;color:#333;line-height:1;padding-bottom:0.2px">49</div>
<div class="c" style="left:929.20px;top:579.72px;width:56.80px;height:23.34px;justify-content:center;font-size:8.67px;color:#333;line-height:1;padding-bottom:0.2px">402回</div>
<div class="c" style="left:986.00px;top:579.72px;width:56.80px;height:23.34px;justify-content:center;font-size:8.67px;color:#333;line-height:1;padding-bottom:0.2px">50回</div>
<div class="c" style="left:1042.80px;top:579.72px;width:55.70px;height:23.34px;justify-content:center;font-size:8.67px;color:#333;line-height:1;padding-bottom:0.2px">なし</div>
<div class="c" style="left:1098.50px;top:579.72px;width:55.80px;height:23.34px;justify-content:center;font-size:8.67px;color:#333;line-height:1;padding-bottom:0.2px">54</div>
<div class="c" style="left:1154.30px;top:579.72px;width:56.30px;height:23.34px;justify-content:center;font-size:8.67px;color:#333;line-height:1;padding-bottom:0.2px">54</div>
<div class="a" style="left:37.0px;top:275.3px;width:1.00px;height:323.90px;background:#e4e4e4"></div>
<div class="a" style="left:95.5px;top:275.3px;width:1.00px;height:323.90px;background:#e4e4e4"></div>
<div class="a" style="left:121.0px;top:275.3px;width:1.00px;height:323.90px;background:#e4e4e4"></div>
<div class="a" style="left:176.5px;top:275.3px;width:1.00px;height:323.90px;background:#e4e4e4"></div>
<div class="a" style="left:210.0px;top:275.3px;width:1.00px;height:323.90px;background:#e4e4e4"></div>
<div class="a" style="left:265.9px;top:275.3px;width:1.00px;height:323.90px;background:#e4e4e4"></div>
<div class="a" style="left:322.5px;top:275.3px;width:1.00px;height:323.90px;background:#e4e4e4"></div>
<div class="a" style="left:378.8px;top:275.3px;width:1.00px;height:323.90px;background:#e4e4e4"></div>
<div class="a" style="left:412.8px;top:275.3px;width:1.00px;height:323.90px;background:#e4e4e4"></div>
<div class="a" style="left:445.8px;top:275.3px;width:1.00px;height:323.90px;background:#e4e4e4"></div>
<div class="a" style="left:479.0px;top:275.3px;width:1.00px;height:323.90px;background:#e4e4e4"></div>
<div class="a" style="left:535.8px;top:275.3px;width:1.00px;height:323.90px;background:#e4e4e4"></div>
<div class="a" style="left:591.5px;top:275.3px;width:1.00px;height:323.90px;background:#e4e4e4"></div>
<div class="a" style="left:647.5px;top:275.3px;width:1.00px;height:323.90px;background:#e4e4e4"></div>
<div class="a" style="left:703.7px;top:275.3px;width:1.00px;height:323.90px;background:#e4e4e4"></div>
<div class="a" style="left:759.9px;top:275.3px;width:1.00px;height:323.90px;background:#e4e4e4"></div>
<div class="a" style="left:816.7px;top:275.3px;width:1.00px;height:323.90px;background:#e4e4e4"></div>
<div class="a" style="left:872.4px;top:275.3px;width:1.00px;height:323.90px;background:#e4e4e4"></div>
<div class="a" style="left:928.7px;top:275.3px;width:1.00px;height:323.90px;background:#e4e4e4"></div>
<div class="a" style="left:985.5px;top:275.3px;width:1.00px;height:323.90px;background:#e4e4e4"></div>
<div class="a" style="left:1042.3px;top:275.3px;width:1.00px;height:323.90px;background:#e4e4e4"></div>
<div class="a" style="left:1098.0px;top:275.3px;width:1.00px;height:323.90px;background:#e4e4e4"></div>
<div class="a" style="left:1153.8px;top:275.3px;width:1.00px;height:323.90px;background:#e4e4e4"></div>
<div class="a" style="left:1210.1px;top:275.3px;width:1.00px;height:323.90px;background:#e4e4e4"></div>
<div class="a" style="left:1266.4px;top:275.3px;width:1.00px;height:323.90px;background:#e4e4e4"></div>
<div class="a" style="left:1267.4px;top:275.5px;width:7.30px;height:323.70px;background:#fff"></div>
<svg style="left:1267.5px;top:279.5px" width="6.5" height="5" viewBox="0 0 6.5 5"><polygon points="0.3,4.6 3.25,0.4 6.2,4.6" fill="#5f5f5f"/></svg>
<svg style="left:1267.5px;top:590px" width="6.5" height="5" viewBox="0 0 6.5 5"><polygon points="0.3,0.4 3.25,4.6 6.2,0.4" fill="#5f5f5f"/></svg>
<div class="a" style="left:1267.6px;top:288.2px;width:6.00px;height:205.50px;background:#8a8a8a;border-radius:3px"></div>
</div>
<div class="a" style="left:10px;top:598.7px;width:1265.70px;height:1.00px;background:#e2e2e2"></div>
<div class="a" style="left:32.6px;top:608.53px;font-size:8px;color:#222;font-weight:normal;">件数: 20</div>
</body></html>
